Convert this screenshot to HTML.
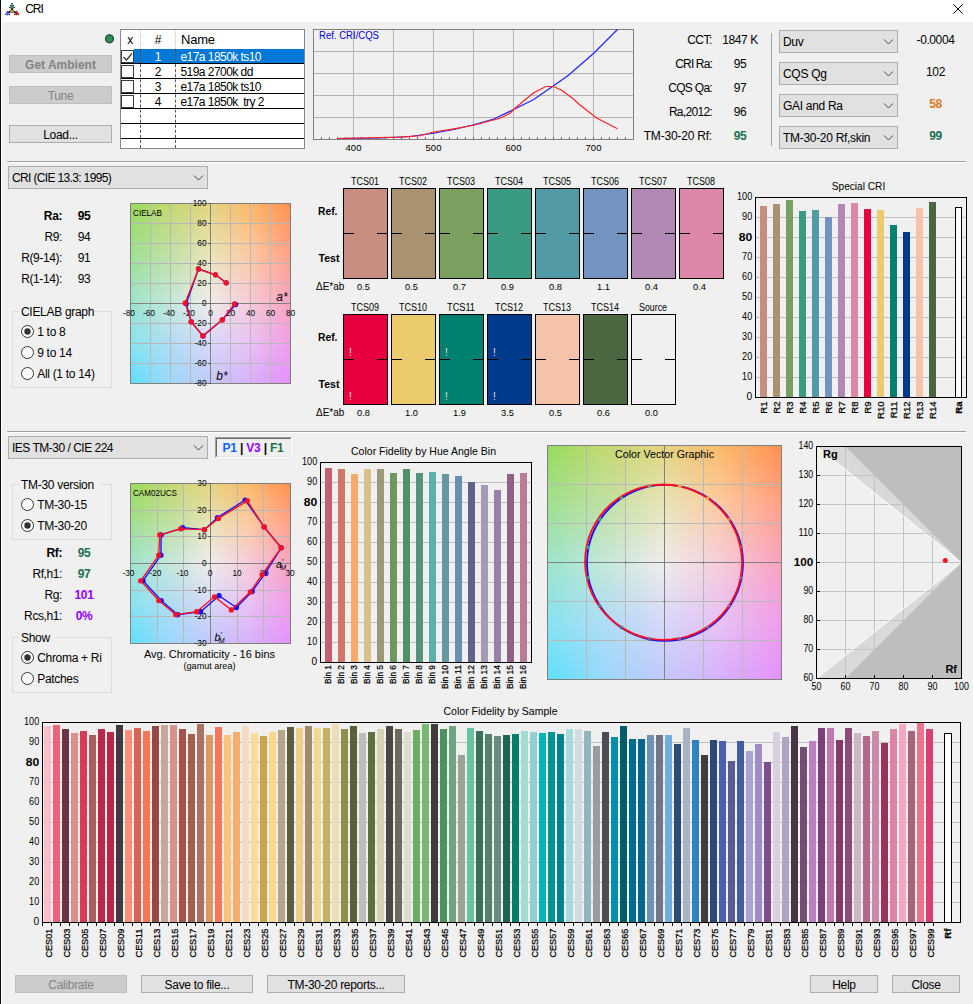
<!DOCTYPE html>
<html><head><meta charset="utf-8"><title>CRI</title>
<style>
html,body{margin:0;padding:0;}
body{width:973px;height:1004px;background:#f0f0f0;position:relative;overflow:hidden;font-family:"Liberation Sans", sans-serif;font-size:12px;color:#000;}
div{position:absolute;box-sizing:border-box;}
.t{white-space:nowrap;overflow:visible;}
.btn{background:#e1e1e1;border:1px solid #adadad;text-align:center;font-size:12px;letter-spacing:-0.3px;}
.btn.dis{background:#cccccc;border-color:#bfbfbf;color:#838383;}
.combo{background:#e1e1e1;border:1px solid #adadad;font-size:12px;letter-spacing:-0.45px;padding-left:3px;}
.grp{border:1px solid #dcdcdc;}
svg{position:absolute;left:0;top:0;}
svg text{font-family:"Liberation Sans", sans-serif;}
</style></head><body>
<div style="left:0px;top:0px;width:973px;height:22px;background:#fff;"></div>
<div style="left:0px;top:0px;width:1px;height:1004px;background:#111;"></div>
<div style="left:1px;top:22px;width:1px;height:982px;background:#fff;"></div>
<div class="t" style="left:25.3px;top:1.0px;width:200px;height:16px;line-height:16px;text-align:left;font-size:12px;font-weight:normal;color:#000;letter-spacing:-1.1px;">CRI</div>
<div class="btn dis" style="left:9px;top:55px;width:103px;height:18px;line-height:18px;font-weight:bold;letter-spacing:0px;">Get Ambient</div>
<div class="btn dis" style="left:9px;top:86px;width:103px;height:18px;line-height:18px;">Tune</div>
<div class="btn" style="left:9px;top:125px;width:103px;height:18px;line-height:18px;">Load...</div>
<div style="left:120px;top:29px;width:185px;height:120px;background:#fff;border:1px solid #828790;"></div>
<div style="left:134px;top:49px;width:170px;height:14px;background:#0078d7;"></div>
<div style="left:121px;top:63px;width:183px;height:1px;background:#000;"></div>
<div style="left:121px;top:78px;width:183px;height:1px;background:#000;"></div>
<div style="left:121px;top:93px;width:183px;height:1px;background:#000;"></div>
<div style="left:121px;top:108px;width:183px;height:1px;background:#000;"></div>
<div style="left:121px;top:123px;width:183px;height:1px;background:#000;"></div>
<div style="left:121px;top:138px;width:183px;height:1px;background:#000;"></div>
<div style="left:140px;top:30px;width:1px;height:19px;border-left:1px dotted #c4c4c4;"></div>
<div style="left:140px;top:49px;width:1px;height:99px;border-left:1px dashed #555;"></div>
<div style="left:175px;top:30px;width:1px;height:19px;border-left:1px dotted #c4c4c4;"></div>
<div style="left:175px;top:49px;width:1px;height:99px;border-left:1px dashed #555;"></div>
<div class="t" style="left:30.0px;top:32.0px;width:200px;height:16px;line-height:16px;text-align:center;font-size:12px;font-weight:normal;color:#000;letter-spacing:-0.3px;">x</div>
<div class="t" style="left:58.0px;top:32.0px;width:200px;height:16px;line-height:16px;text-align:center;font-size:12px;font-weight:normal;color:#000;letter-spacing:-0.3px;">#</div>
<div class="t" style="left:181px;top:32.0px;width:200px;height:16px;line-height:16px;text-align:left;font-size:13px;font-weight:normal;color:#000;letter-spacing:-0.2px;">Name</div>
<div class="t" style="left:58.0px;top:48.5px;width:200px;height:16px;line-height:16px;text-align:center;font-size:12px;font-weight:normal;color:#fff;letter-spacing:-0.3px;">1</div>
<div class="t" style="left:180.5px;top:48.5px;width:200px;height:16px;line-height:16px;text-align:left;font-size:12px;font-weight:normal;color:#fff;letter-spacing:-0.55px;">e17a 1850k ts10</div>
<div style="left:121px;top:50px;width:13px;height:13px;background:#fff;border:1px solid #3c3c3c;"></div>
<div class="t" style="left:58.0px;top:63.5px;width:200px;height:16px;line-height:16px;text-align:center;font-size:12px;font-weight:normal;color:#000;letter-spacing:-0.3px;">2</div>
<div class="t" style="left:180.5px;top:63.5px;width:200px;height:16px;line-height:16px;text-align:left;font-size:12px;font-weight:normal;color:#000;letter-spacing:-0.55px;">519a 2700k dd</div>
<div style="left:121px;top:65px;width:13px;height:13px;background:#fff;border:1px solid #3c3c3c;"></div>
<div class="t" style="left:58.0px;top:78.5px;width:200px;height:16px;line-height:16px;text-align:center;font-size:12px;font-weight:normal;color:#000;letter-spacing:-0.3px;">3</div>
<div class="t" style="left:180.5px;top:78.5px;width:200px;height:16px;line-height:16px;text-align:left;font-size:12px;font-weight:normal;color:#000;letter-spacing:-0.55px;">e17a 1850k ts10</div>
<div style="left:121px;top:80px;width:13px;height:13px;background:#fff;border:1px solid #3c3c3c;"></div>
<div class="t" style="left:58.0px;top:93.5px;width:200px;height:16px;line-height:16px;text-align:center;font-size:12px;font-weight:normal;color:#000;letter-spacing:-0.3px;">4</div>
<div class="t" style="left:180.5px;top:93.5px;width:200px;height:16px;line-height:16px;text-align:left;font-size:12px;font-weight:normal;color:#000;letter-spacing:-0.55px;">e17a 1850k&nbsp; try 2</div>
<div style="left:121px;top:95px;width:13px;height:13px;background:#fff;border:1px solid #3c3c3c;"></div>
<div class="t" style="left:512px;top:32.0px;width:200px;height:16px;line-height:16px;text-align:right;font-size:12px;font-weight:normal;color:#000;letter-spacing:-0.45px;">CCT:</div>
<div class="t" style="left:640.0px;top:32.0px;width:200px;height:16px;line-height:16px;text-align:center;font-size:12px;font-weight:normal;color:#000;letter-spacing:-0.4px;">1847 K</div>
<div class="t" style="left:512px;top:56.0px;width:200px;height:16px;line-height:16px;text-align:right;font-size:12px;font-weight:normal;color:#000;letter-spacing:-0.85px;">CRI Ra:</div>
<div class="t" style="left:640.0px;top:56.0px;width:200px;height:16px;line-height:16px;text-align:center;font-size:12px;font-weight:normal;color:#000;letter-spacing:-0.4px;">95</div>
<div class="t" style="left:512px;top:80.0px;width:200px;height:16px;line-height:16px;text-align:right;font-size:12px;font-weight:normal;color:#000;letter-spacing:-0.7px;">CQS Qa:</div>
<div class="t" style="left:640.0px;top:80.0px;width:200px;height:16px;line-height:16px;text-align:center;font-size:12px;font-weight:normal;color:#000;letter-spacing:-0.4px;">97</div>
<div class="t" style="left:512px;top:103.5px;width:200px;height:16px;line-height:16px;text-align:right;font-size:12px;font-weight:normal;color:#000;letter-spacing:-0.7px;">Ra,2012:</div>
<div class="t" style="left:640.0px;top:103.5px;width:200px;height:16px;line-height:16px;text-align:center;font-size:12px;font-weight:normal;color:#000;letter-spacing:-0.4px;">96</div>
<div class="t" style="left:512px;top:127.5px;width:200px;height:16px;line-height:16px;text-align:right;font-size:12px;font-weight:normal;color:#000;letter-spacing:-0.2px;">TM-30-20 Rf:</div>
<div class="t" style="left:640.0px;top:127.5px;width:200px;height:16px;line-height:16px;text-align:center;font-size:12px;font-weight:bold;color:#1a7050;letter-spacing:-0.3px;">95</div>
<div style="left:771px;top:33px;width:1px;height:113px;background:#a0a0a0;"></div>
<div class="combo" style="left:779px;top:30px;width:119px;height:23px;line-height:23px;letter-spacing:-0.3px;">Duv</div>
<div class="t" style="left:835.5px;top:32.0px;width:200px;height:16px;line-height:16px;text-align:center;font-size:12px;font-weight:normal;color:#000;letter-spacing:-0.4px;">-0.0004</div>
<div class="combo" style="left:779px;top:62px;width:119px;height:23px;line-height:23px;letter-spacing:-0.3px;">CQS Qg</div>
<div class="t" style="left:835.5px;top:64.0px;width:200px;height:16px;line-height:16px;text-align:center;font-size:12px;font-weight:normal;color:#000;letter-spacing:-0.4px;">102</div>
<div class="combo" style="left:779px;top:94px;width:119px;height:23px;line-height:23px;letter-spacing:-0.3px;">GAI and Ra</div>
<div class="t" style="left:835.5px;top:96.0px;width:200px;height:16px;line-height:16px;text-align:center;font-size:12px;font-weight:bold;color:#e07820;letter-spacing:-0.4px;">58</div>
<div class="combo" style="left:779px;top:126px;width:119px;height:23px;line-height:23px;letter-spacing:-0.3px;">TM-30-20 Rf,skin</div>
<div class="t" style="left:835.5px;top:128.0px;width:200px;height:16px;line-height:16px;text-align:center;font-size:12px;font-weight:bold;color:#1a7050;letter-spacing:-0.4px;">99</div>
<div style="left:7px;top:161px;width:959px;height:1px;background:#a0a0a0;"></div>
<div style="left:7px;top:162px;width:959px;height:1px;background:#fff;"></div>
<div style="left:7px;top:431px;width:959px;height:1px;background:#a0a0a0;"></div>
<div style="left:7px;top:432px;width:959px;height:1px;background:#fff;"></div>
<div class="combo" style="left:8px;top:166px;width:200px;height:23px;line-height:23px;letter-spacing:-0.65px;">CRI (CIE 13.3: 1995)</div>
<div class="t" style="left:-138px;top:207.5px;width:200px;height:16px;line-height:16px;text-align:right;font-size:12px;font-weight:bold;color:#000;letter-spacing:-0.4px;">Ra:</div>
<div class="t" style="left:-16.0px;top:207.5px;width:200px;height:16px;line-height:16px;text-align:center;font-size:12px;font-weight:bold;color:#000;letter-spacing:-0.4px;">95</div>
<div class="t" style="left:-138px;top:229.0px;width:200px;height:16px;line-height:16px;text-align:right;font-size:12px;font-weight:normal;color:#000;letter-spacing:-0.4px;">R9:</div>
<div class="t" style="left:-16.0px;top:229.0px;width:200px;height:16px;line-height:16px;text-align:center;font-size:12px;font-weight:normal;color:#000;letter-spacing:-0.4px;">94</div>
<div class="t" style="left:-138px;top:250.0px;width:200px;height:16px;line-height:16px;text-align:right;font-size:12px;font-weight:normal;color:#000;letter-spacing:-0.4px;">R(9-14):</div>
<div class="t" style="left:-16.0px;top:250.0px;width:200px;height:16px;line-height:16px;text-align:center;font-size:12px;font-weight:normal;color:#000;letter-spacing:-0.4px;">91</div>
<div class="t" style="left:-138px;top:271.0px;width:200px;height:16px;line-height:16px;text-align:right;font-size:12px;font-weight:normal;color:#000;letter-spacing:-0.4px;">R(1-14):</div>
<div class="t" style="left:-16.0px;top:271.0px;width:200px;height:16px;line-height:16px;text-align:center;font-size:12px;font-weight:normal;color:#000;letter-spacing:-0.4px;">93</div>
<div class="grp" style="left:12px;top:311px;width:100px;height:77px;"></div>
<div style="left:19px;top:303px;width:76px;height:16px;background:#f0f0f0;"></div>
<div class="t" style="left:21px;top:303.5px;width:200px;height:16px;line-height:16px;text-align:left;font-size:12px;font-weight:normal;color:#000;letter-spacing:-0.3px;">CIELAB graph</div>
<div class="t" style="left:37.2px;top:323.5px;width:200px;height:16px;line-height:16px;text-align:left;font-size:12px;font-weight:normal;color:#000;letter-spacing:-0.3px;">1 to 8</div>
<div class="t" style="left:37.2px;top:344.5px;width:200px;height:16px;line-height:16px;text-align:left;font-size:12px;font-weight:normal;color:#000;letter-spacing:-0.3px;">9 to 14</div>
<div class="t" style="left:37.2px;top:365.5px;width:200px;height:16px;line-height:16px;text-align:left;font-size:12px;font-weight:normal;color:#000;letter-spacing:-0.3px;">All (1 to 14)</div>
<div style="left:130px;top:203px;width:161px;height:181px;overflow:hidden;"><div style="left:0px;top:0px;width:40px;height:50px;background:linear-gradient(to bottom,#98dc5c,#a0e090);"></div><div style="left:0px;top:0px;width:40px;height:50px;background:linear-gradient(to bottom,#c4d870,#c0e0a4);-webkit-mask-image:linear-gradient(to right,transparent,#000);mask-image:linear-gradient(to right,transparent,#000);"></div><div style="left:40px;top:0px;width:40px;height:50px;background:linear-gradient(to bottom,#c4d870,#c0e0a4);"></div><div style="left:40px;top:0px;width:40px;height:50px;background:linear-gradient(to bottom,#e4d480,#e8e4b8);-webkit-mask-image:linear-gradient(to right,transparent,#000);mask-image:linear-gradient(to right,transparent,#000);"></div><div style="left:80px;top:0px;width:41px;height:50px;background:linear-gradient(to bottom,#e4d480,#e8e4b8);"></div><div style="left:80px;top:0px;width:41px;height:50px;background:linear-gradient(to bottom,#fcb868,#fcc8a0);-webkit-mask-image:linear-gradient(to right,transparent,#000);mask-image:linear-gradient(to right,transparent,#000);"></div><div style="left:121px;top:0px;width:40px;height:50px;background:linear-gradient(to bottom,#fcb868,#fcc8a0);"></div><div style="left:121px;top:0px;width:40px;height:50px;background:linear-gradient(to bottom,#ff9050,#ffa088);-webkit-mask-image:linear-gradient(to right,transparent,#000);mask-image:linear-gradient(to right,transparent,#000);"></div><div style="left:0px;top:50px;width:40px;height:50px;background:linear-gradient(to bottom,#a0e090,#9ce4cc);"></div><div style="left:0px;top:50px;width:40px;height:50px;background:linear-gradient(to bottom,#c0e0a4,#c4e8da);-webkit-mask-image:linear-gradient(to right,transparent,#000);mask-image:linear-gradient(to right,transparent,#000);"></div><div style="left:40px;top:50px;width:40px;height:50px;background:linear-gradient(to bottom,#c0e0a4,#c4e8da);"></div><div style="left:40px;top:50px;width:40px;height:50px;background:linear-gradient(to bottom,#e8e4b8,#f0ecec);-webkit-mask-image:linear-gradient(to right,transparent,#000);mask-image:linear-gradient(to right,transparent,#000);"></div><div style="left:80px;top:50px;width:41px;height:50px;background:linear-gradient(to bottom,#e8e4b8,#f0ecec);"></div><div style="left:80px;top:50px;width:41px;height:50px;background:linear-gradient(to bottom,#fcc8a0,#f6cad8);-webkit-mask-image:linear-gradient(to right,transparent,#000);mask-image:linear-gradient(to right,transparent,#000);"></div><div style="left:121px;top:50px;width:40px;height:50px;background:linear-gradient(to bottom,#fcc8a0,#f6cad8);"></div><div style="left:121px;top:50px;width:40px;height:50px;background:linear-gradient(to bottom,#ffa088,#f8a2c0);-webkit-mask-image:linear-gradient(to right,transparent,#000);mask-image:linear-gradient(to right,transparent,#000);"></div><div style="left:0px;top:100px;width:40px;height:41px;background:linear-gradient(to bottom,#9ce4cc,#88e4f0);"></div><div style="left:0px;top:100px;width:40px;height:41px;background:linear-gradient(to bottom,#c4e8da,#b0dcf4);-webkit-mask-image:linear-gradient(to right,transparent,#000);mask-image:linear-gradient(to right,transparent,#000);"></div><div style="left:40px;top:100px;width:40px;height:41px;background:linear-gradient(to bottom,#c4e8da,#b0dcf4);"></div><div style="left:40px;top:100px;width:40px;height:41px;background:linear-gradient(to bottom,#f0ecec,#d8d8f8);-webkit-mask-image:linear-gradient(to right,transparent,#000);mask-image:linear-gradient(to right,transparent,#000);"></div><div style="left:80px;top:100px;width:41px;height:41px;background:linear-gradient(to bottom,#f0ecec,#d8d8f8);"></div><div style="left:80px;top:100px;width:41px;height:41px;background:linear-gradient(to bottom,#f6cad8,#e8c0f4);-webkit-mask-image:linear-gradient(to right,transparent,#000);mask-image:linear-gradient(to right,transparent,#000);"></div><div style="left:121px;top:100px;width:40px;height:41px;background:linear-gradient(to bottom,#f6cad8,#e8c0f4);"></div><div style="left:121px;top:100px;width:40px;height:41px;background:linear-gradient(to bottom,#f8a2c0,#f09ce8);-webkit-mask-image:linear-gradient(to right,transparent,#000);mask-image:linear-gradient(to right,transparent,#000);"></div><div style="left:0px;top:141px;width:40px;height:40px;background:linear-gradient(to bottom,#88e4f0,#5ce0fc);"></div><div style="left:0px;top:141px;width:40px;height:40px;background:linear-gradient(to bottom,#b0dcf4,#9cd8fc);-webkit-mask-image:linear-gradient(to right,transparent,#000);mask-image:linear-gradient(to right,transparent,#000);"></div><div style="left:40px;top:141px;width:40px;height:40px;background:linear-gradient(to bottom,#b0dcf4,#9cd8fc);"></div><div style="left:40px;top:141px;width:40px;height:40px;background:linear-gradient(to bottom,#d8d8f8,#c2c8fc);-webkit-mask-image:linear-gradient(to right,transparent,#000);mask-image:linear-gradient(to right,transparent,#000);"></div><div style="left:80px;top:141px;width:41px;height:40px;background:linear-gradient(to bottom,#d8d8f8,#c2c8fc);"></div><div style="left:80px;top:141px;width:41px;height:40px;background:linear-gradient(to bottom,#e8c0f4,#d8b0fc);-webkit-mask-image:linear-gradient(to right,transparent,#000);mask-image:linear-gradient(to right,transparent,#000);"></div><div style="left:121px;top:141px;width:40px;height:40px;background:linear-gradient(to bottom,#e8c0f4,#d8b0fc);"></div><div style="left:121px;top:141px;width:40px;height:40px;background:linear-gradient(to bottom,#f09ce8,#e490fc);-webkit-mask-image:linear-gradient(to right,transparent,#000);mask-image:linear-gradient(to right,transparent,#000);"></div></div>
<div class="combo" style="left:8px;top:436px;width:200px;height:23px;line-height:23px;letter-spacing:-0.5px;">IES TM-30 / CIE 224</div>
<div style="left:215px;top:437px;width:77px;height:21px;border:1px solid;border-color:#a0a0a0 #fff #fff #a0a0a0;background:#f0f0f0;"></div>
<div style="left:216px;top:438px;width:75px;height:19px;border:1px solid;border-color:#696969 #e3e3e3 #e3e3e3 #696969;"></div>
<div class="t" style="left:222.5px;top:439.5px;width:200px;height:16px;line-height:16px;text-align:left;font-size:12px;font-weight:bold;color:#000;letter-spacing:-0.2px;"><span style="color:#0a64ff">P1</span> | <span style="color:#9400ff">V3</span> | <span style="color:#1a7050">F1</span></div>
<div class="grp" style="left:12px;top:484px;width:100px;height:56px;"></div>
<div style="left:19px;top:476px;width:82px;height:16px;background:#f0f0f0;"></div>
<div class="t" style="left:21px;top:476.5px;width:200px;height:16px;line-height:16px;text-align:left;font-size:12px;font-weight:normal;color:#000;letter-spacing:-0.3px;">TM-30 version</div>
<div class="t" style="left:37.2px;top:496.5px;width:200px;height:16px;line-height:16px;text-align:left;font-size:12px;font-weight:normal;color:#000;letter-spacing:-0.3px;">TM-30-15</div>
<div class="t" style="left:37.2px;top:517.5px;width:200px;height:16px;line-height:16px;text-align:left;font-size:12px;font-weight:normal;color:#000;letter-spacing:-0.3px;">TM-30-20</div>
<div class="t" style="left:-138px;top:545.0px;width:200px;height:16px;line-height:16px;text-align:right;font-size:12px;font-weight:bold;color:#000;letter-spacing:-0.4px;">Rf:</div>
<div class="t" style="left:-16.0px;top:545.0px;width:200px;height:16px;line-height:16px;text-align:center;font-size:12px;font-weight:bold;color:#1a7050;letter-spacing:-0.4px;">95</div>
<div class="t" style="left:-138px;top:566.0px;width:200px;height:16px;line-height:16px;text-align:right;font-size:12px;font-weight:normal;color:#000;letter-spacing:-0.4px;">Rf,h1:</div>
<div class="t" style="left:-16.0px;top:566.0px;width:200px;height:16px;line-height:16px;text-align:center;font-size:12px;font-weight:bold;color:#1a7050;letter-spacing:-0.4px;">97</div>
<div class="t" style="left:-138px;top:587.0px;width:200px;height:16px;line-height:16px;text-align:right;font-size:12px;font-weight:normal;color:#000;letter-spacing:-0.4px;">Rg:</div>
<div class="t" style="left:-16.0px;top:587.0px;width:200px;height:16px;line-height:16px;text-align:center;font-size:12px;font-weight:bold;color:#9400ff;letter-spacing:-0.4px;">101</div>
<div class="t" style="left:-138px;top:608.0px;width:200px;height:16px;line-height:16px;text-align:right;font-size:12px;font-weight:normal;color:#000;letter-spacing:-0.4px;">Rcs,h1:</div>
<div class="t" style="left:-16.0px;top:608.0px;width:200px;height:16px;line-height:16px;text-align:center;font-size:12px;font-weight:bold;color:#9400ff;letter-spacing:-0.4px;">0%</div>
<div class="grp" style="left:12px;top:637px;width:100px;height:56px;"></div>
<div style="left:19px;top:629px;width:36px;height:16px;background:#f0f0f0;"></div>
<div class="t" style="left:21px;top:629.5px;width:200px;height:16px;line-height:16px;text-align:left;font-size:12px;font-weight:normal;color:#000;letter-spacing:-0.3px;">Show</div>
<div class="t" style="left:37.2px;top:649.5px;width:200px;height:16px;line-height:16px;text-align:left;font-size:12px;font-weight:normal;color:#000;letter-spacing:-0.3px;">Chroma + Ri</div>
<div class="t" style="left:37.2px;top:670.5px;width:200px;height:16px;line-height:16px;text-align:left;font-size:12px;font-weight:normal;color:#000;letter-spacing:-0.3px;">Patches</div>
<div style="left:130px;top:483px;width:161px;height:161px;overflow:hidden;"><div style="left:0px;top:0px;width:40px;height:40px;background:linear-gradient(to bottom,#98dc5c,#a0e090);"></div><div style="left:0px;top:0px;width:40px;height:40px;background:linear-gradient(to bottom,#c4d870,#c0e0a4);-webkit-mask-image:linear-gradient(to right,transparent,#000);mask-image:linear-gradient(to right,transparent,#000);"></div><div style="left:40px;top:0px;width:40px;height:40px;background:linear-gradient(to bottom,#c4d870,#c0e0a4);"></div><div style="left:40px;top:0px;width:40px;height:40px;background:linear-gradient(to bottom,#e4d480,#e8e4b8);-webkit-mask-image:linear-gradient(to right,transparent,#000);mask-image:linear-gradient(to right,transparent,#000);"></div><div style="left:80px;top:0px;width:41px;height:40px;background:linear-gradient(to bottom,#e4d480,#e8e4b8);"></div><div style="left:80px;top:0px;width:41px;height:40px;background:linear-gradient(to bottom,#fcb868,#fcc8a0);-webkit-mask-image:linear-gradient(to right,transparent,#000);mask-image:linear-gradient(to right,transparent,#000);"></div><div style="left:121px;top:0px;width:40px;height:40px;background:linear-gradient(to bottom,#fcb868,#fcc8a0);"></div><div style="left:121px;top:0px;width:40px;height:40px;background:linear-gradient(to bottom,#ff9050,#ffa088);-webkit-mask-image:linear-gradient(to right,transparent,#000);mask-image:linear-gradient(to right,transparent,#000);"></div><div style="left:0px;top:40px;width:40px;height:40px;background:linear-gradient(to bottom,#a0e090,#9ce4cc);"></div><div style="left:0px;top:40px;width:40px;height:40px;background:linear-gradient(to bottom,#c0e0a4,#c4e8da);-webkit-mask-image:linear-gradient(to right,transparent,#000);mask-image:linear-gradient(to right,transparent,#000);"></div><div style="left:40px;top:40px;width:40px;height:40px;background:linear-gradient(to bottom,#c0e0a4,#c4e8da);"></div><div style="left:40px;top:40px;width:40px;height:40px;background:linear-gradient(to bottom,#e8e4b8,#f0ecec);-webkit-mask-image:linear-gradient(to right,transparent,#000);mask-image:linear-gradient(to right,transparent,#000);"></div><div style="left:80px;top:40px;width:41px;height:40px;background:linear-gradient(to bottom,#e8e4b8,#f0ecec);"></div><div style="left:80px;top:40px;width:41px;height:40px;background:linear-gradient(to bottom,#fcc8a0,#f6cad8);-webkit-mask-image:linear-gradient(to right,transparent,#000);mask-image:linear-gradient(to right,transparent,#000);"></div><div style="left:121px;top:40px;width:40px;height:40px;background:linear-gradient(to bottom,#fcc8a0,#f6cad8);"></div><div style="left:121px;top:40px;width:40px;height:40px;background:linear-gradient(to bottom,#ffa088,#f8a2c0);-webkit-mask-image:linear-gradient(to right,transparent,#000);mask-image:linear-gradient(to right,transparent,#000);"></div><div style="left:0px;top:80px;width:40px;height:41px;background:linear-gradient(to bottom,#9ce4cc,#88e4f0);"></div><div style="left:0px;top:80px;width:40px;height:41px;background:linear-gradient(to bottom,#c4e8da,#b0dcf4);-webkit-mask-image:linear-gradient(to right,transparent,#000);mask-image:linear-gradient(to right,transparent,#000);"></div><div style="left:40px;top:80px;width:40px;height:41px;background:linear-gradient(to bottom,#c4e8da,#b0dcf4);"></div><div style="left:40px;top:80px;width:40px;height:41px;background:linear-gradient(to bottom,#f0ecec,#d8d8f8);-webkit-mask-image:linear-gradient(to right,transparent,#000);mask-image:linear-gradient(to right,transparent,#000);"></div><div style="left:80px;top:80px;width:41px;height:41px;background:linear-gradient(to bottom,#f0ecec,#d8d8f8);"></div><div style="left:80px;top:80px;width:41px;height:41px;background:linear-gradient(to bottom,#f6cad8,#e8c0f4);-webkit-mask-image:linear-gradient(to right,transparent,#000);mask-image:linear-gradient(to right,transparent,#000);"></div><div style="left:121px;top:80px;width:40px;height:41px;background:linear-gradient(to bottom,#f6cad8,#e8c0f4);"></div><div style="left:121px;top:80px;width:40px;height:41px;background:linear-gradient(to bottom,#f8a2c0,#f09ce8);-webkit-mask-image:linear-gradient(to right,transparent,#000);mask-image:linear-gradient(to right,transparent,#000);"></div><div style="left:0px;top:121px;width:40px;height:40px;background:linear-gradient(to bottom,#88e4f0,#5ce0fc);"></div><div style="left:0px;top:121px;width:40px;height:40px;background:linear-gradient(to bottom,#b0dcf4,#9cd8fc);-webkit-mask-image:linear-gradient(to right,transparent,#000);mask-image:linear-gradient(to right,transparent,#000);"></div><div style="left:40px;top:121px;width:40px;height:40px;background:linear-gradient(to bottom,#b0dcf4,#9cd8fc);"></div><div style="left:40px;top:121px;width:40px;height:40px;background:linear-gradient(to bottom,#d8d8f8,#c2c8fc);-webkit-mask-image:linear-gradient(to right,transparent,#000);mask-image:linear-gradient(to right,transparent,#000);"></div><div style="left:80px;top:121px;width:41px;height:40px;background:linear-gradient(to bottom,#d8d8f8,#c2c8fc);"></div><div style="left:80px;top:121px;width:41px;height:40px;background:linear-gradient(to bottom,#e8c0f4,#d8b0fc);-webkit-mask-image:linear-gradient(to right,transparent,#000);mask-image:linear-gradient(to right,transparent,#000);"></div><div style="left:121px;top:121px;width:40px;height:40px;background:linear-gradient(to bottom,#e8c0f4,#d8b0fc);"></div><div style="left:121px;top:121px;width:40px;height:40px;background:linear-gradient(to bottom,#f09ce8,#e490fc);-webkit-mask-image:linear-gradient(to right,transparent,#000);mask-image:linear-gradient(to right,transparent,#000);"></div></div>
<div style="left:547px;top:445px;width:235px;height:235px;overflow:hidden;"><div style="left:0px;top:0px;width:59px;height:59px;background:linear-gradient(to bottom,#98dc5c,#a0e090);"></div><div style="left:0px;top:0px;width:59px;height:59px;background:linear-gradient(to bottom,#c4d870,#c0e0a4);-webkit-mask-image:linear-gradient(to right,transparent,#000);mask-image:linear-gradient(to right,transparent,#000);"></div><div style="left:59px;top:0px;width:59px;height:59px;background:linear-gradient(to bottom,#c4d870,#c0e0a4);"></div><div style="left:59px;top:0px;width:59px;height:59px;background:linear-gradient(to bottom,#e4d480,#e8e4b8);-webkit-mask-image:linear-gradient(to right,transparent,#000);mask-image:linear-gradient(to right,transparent,#000);"></div><div style="left:118px;top:0px;width:58px;height:59px;background:linear-gradient(to bottom,#e4d480,#e8e4b8);"></div><div style="left:118px;top:0px;width:58px;height:59px;background:linear-gradient(to bottom,#fcb868,#fcc8a0);-webkit-mask-image:linear-gradient(to right,transparent,#000);mask-image:linear-gradient(to right,transparent,#000);"></div><div style="left:176px;top:0px;width:59px;height:59px;background:linear-gradient(to bottom,#fcb868,#fcc8a0);"></div><div style="left:176px;top:0px;width:59px;height:59px;background:linear-gradient(to bottom,#ff9050,#ffa088);-webkit-mask-image:linear-gradient(to right,transparent,#000);mask-image:linear-gradient(to right,transparent,#000);"></div><div style="left:0px;top:59px;width:59px;height:59px;background:linear-gradient(to bottom,#a0e090,#9ce4cc);"></div><div style="left:0px;top:59px;width:59px;height:59px;background:linear-gradient(to bottom,#c0e0a4,#c4e8da);-webkit-mask-image:linear-gradient(to right,transparent,#000);mask-image:linear-gradient(to right,transparent,#000);"></div><div style="left:59px;top:59px;width:59px;height:59px;background:linear-gradient(to bottom,#c0e0a4,#c4e8da);"></div><div style="left:59px;top:59px;width:59px;height:59px;background:linear-gradient(to bottom,#e8e4b8,#f0ecec);-webkit-mask-image:linear-gradient(to right,transparent,#000);mask-image:linear-gradient(to right,transparent,#000);"></div><div style="left:118px;top:59px;width:58px;height:59px;background:linear-gradient(to bottom,#e8e4b8,#f0ecec);"></div><div style="left:118px;top:59px;width:58px;height:59px;background:linear-gradient(to bottom,#fcc8a0,#f6cad8);-webkit-mask-image:linear-gradient(to right,transparent,#000);mask-image:linear-gradient(to right,transparent,#000);"></div><div style="left:176px;top:59px;width:59px;height:59px;background:linear-gradient(to bottom,#fcc8a0,#f6cad8);"></div><div style="left:176px;top:59px;width:59px;height:59px;background:linear-gradient(to bottom,#ffa088,#f8a2c0);-webkit-mask-image:linear-gradient(to right,transparent,#000);mask-image:linear-gradient(to right,transparent,#000);"></div><div style="left:0px;top:118px;width:59px;height:58px;background:linear-gradient(to bottom,#9ce4cc,#88e4f0);"></div><div style="left:0px;top:118px;width:59px;height:58px;background:linear-gradient(to bottom,#c4e8da,#b0dcf4);-webkit-mask-image:linear-gradient(to right,transparent,#000);mask-image:linear-gradient(to right,transparent,#000);"></div><div style="left:59px;top:118px;width:59px;height:58px;background:linear-gradient(to bottom,#c4e8da,#b0dcf4);"></div><div style="left:59px;top:118px;width:59px;height:58px;background:linear-gradient(to bottom,#f0ecec,#d8d8f8);-webkit-mask-image:linear-gradient(to right,transparent,#000);mask-image:linear-gradient(to right,transparent,#000);"></div><div style="left:118px;top:118px;width:58px;height:58px;background:linear-gradient(to bottom,#f0ecec,#d8d8f8);"></div><div style="left:118px;top:118px;width:58px;height:58px;background:linear-gradient(to bottom,#f6cad8,#e8c0f4);-webkit-mask-image:linear-gradient(to right,transparent,#000);mask-image:linear-gradient(to right,transparent,#000);"></div><div style="left:176px;top:118px;width:59px;height:58px;background:linear-gradient(to bottom,#f6cad8,#e8c0f4);"></div><div style="left:176px;top:118px;width:59px;height:58px;background:linear-gradient(to bottom,#f8a2c0,#f09ce8);-webkit-mask-image:linear-gradient(to right,transparent,#000);mask-image:linear-gradient(to right,transparent,#000);"></div><div style="left:0px;top:176px;width:59px;height:59px;background:linear-gradient(to bottom,#88e4f0,#5ce0fc);"></div><div style="left:0px;top:176px;width:59px;height:59px;background:linear-gradient(to bottom,#b0dcf4,#9cd8fc);-webkit-mask-image:linear-gradient(to right,transparent,#000);mask-image:linear-gradient(to right,transparent,#000);"></div><div style="left:59px;top:176px;width:59px;height:59px;background:linear-gradient(to bottom,#b0dcf4,#9cd8fc);"></div><div style="left:59px;top:176px;width:59px;height:59px;background:linear-gradient(to bottom,#d8d8f8,#c2c8fc);-webkit-mask-image:linear-gradient(to right,transparent,#000);mask-image:linear-gradient(to right,transparent,#000);"></div><div style="left:118px;top:176px;width:58px;height:59px;background:linear-gradient(to bottom,#d8d8f8,#c2c8fc);"></div><div style="left:118px;top:176px;width:58px;height:59px;background:linear-gradient(to bottom,#e8c0f4,#d8b0fc);-webkit-mask-image:linear-gradient(to right,transparent,#000);mask-image:linear-gradient(to right,transparent,#000);"></div><div style="left:176px;top:176px;width:59px;height:59px;background:linear-gradient(to bottom,#e8c0f4,#d8b0fc);"></div><div style="left:176px;top:176px;width:59px;height:59px;background:linear-gradient(to bottom,#f09ce8,#e490fc);-webkit-mask-image:linear-gradient(to right,transparent,#000);mask-image:linear-gradient(to right,transparent,#000);"></div></div>
<div class="btn dis" style="left:15px;top:975px;width:112px;height:18px;line-height:18px;">Calibrate</div>
<div class="btn" style="left:141px;top:975px;width:112px;height:18px;line-height:18px;">Save to file...</div>
<div class="btn" style="left:267px;top:975px;width:138px;height:18px;line-height:18px;">TM-30-20 reports...</div>
<div class="btn" style="left:810px;top:975px;width:68px;height:18px;line-height:18px;">Help</div>
<div class="btn" style="left:892px;top:975px;width:68px;height:18px;line-height:18px;">Close</div>
<svg width="973" height="1004" viewBox="0 0 973 1004">
<path d="M953.3 4.3 L962.7 13.7 M962.7 4.3 L953.3 13.7" stroke="#000" stroke-width="1" fill="none"/>
<g><path d="M12 8 L12 10.5 M10 11.5 L8.5 12.5 M14 11.5 L15.5 12.5" stroke="#000" stroke-width="1.6" fill="none"/><path d="M12 3.2 L14.8 7.8 L9.2 7.8 Z" fill="#3a9464" stroke="#000" stroke-width="1" stroke-dasharray="1 1.2"/><path d="M5.2 14.8 L7.6 10.8 L10 14.8 Z" fill="#6464ff" stroke="#00004a" stroke-width="0.9" stroke-dasharray="1 1.3"/><path d="M14.2 14.8 L16.6 10.8 L19 14.8 Z" fill="#ff0000" stroke="#300000" stroke-width="0.9" stroke-dasharray="1 1.3"/><rect x="10.8" y="9.9" width="2.4" height="2.4" fill="#ffd45a" stroke="#3a3000" stroke-width="0.8"/></g>
<circle cx="109.5" cy="38.8" r="4" fill="#2e8b57" stroke="#1c4a30" stroke-width="1.2"/>
<path d="M123.5 57 L126.5 60 L132 53.5" stroke="#333" stroke-width="1.2" fill="none"/>
<line x1="353.5" y1="29.5" x2="353.5" y2="139.5" stroke="#b4b4b4" stroke-width="1" shape-rendering="crispEdges"/>
<line x1="393.5" y1="29.5" x2="393.5" y2="139.5" stroke="#b4b4b4" stroke-width="1" shape-rendering="crispEdges"/>
<line x1="433.5" y1="29.5" x2="433.5" y2="139.5" stroke="#b4b4b4" stroke-width="1" shape-rendering="crispEdges"/>
<line x1="473.5" y1="29.5" x2="473.5" y2="139.5" stroke="#b4b4b4" stroke-width="1" shape-rendering="crispEdges"/>
<line x1="513.5" y1="29.5" x2="513.5" y2="139.5" stroke="#b4b4b4" stroke-width="1" shape-rendering="crispEdges"/>
<line x1="553.5" y1="29.5" x2="553.5" y2="139.5" stroke="#b4b4b4" stroke-width="1" shape-rendering="crispEdges"/>
<line x1="593.5" y1="29.5" x2="593.5" y2="139.5" stroke="#b4b4b4" stroke-width="1" shape-rendering="crispEdges"/>
<line x1="313.5" y1="51.5" x2="633.5" y2="51.5" stroke="#b4b4b4" stroke-width="1" shape-rendering="crispEdges"/>
<line x1="313.5" y1="73.5" x2="633.5" y2="73.5" stroke="#b4b4b4" stroke-width="1" shape-rendering="crispEdges"/>
<line x1="313.5" y1="95.5" x2="633.5" y2="95.5" stroke="#b4b4b4" stroke-width="1" shape-rendering="crispEdges"/>
<line x1="313.5" y1="117.5" x2="633.5" y2="117.5" stroke="#b4b4b4" stroke-width="1" shape-rendering="crispEdges"/>
<line x1="321.5" y1="136.5" x2="321.5" y2="139.5" stroke="#606060" stroke-width="1" shape-rendering="crispEdges"/>
<line x1="329.5" y1="136.5" x2="329.5" y2="139.5" stroke="#606060" stroke-width="1" shape-rendering="crispEdges"/>
<line x1="337.5" y1="136.5" x2="337.5" y2="139.5" stroke="#606060" stroke-width="1" shape-rendering="crispEdges"/>
<line x1="345.5" y1="136.5" x2="345.5" y2="139.5" stroke="#606060" stroke-width="1" shape-rendering="crispEdges"/>
<line x1="353.5" y1="136.5" x2="353.5" y2="139.5" stroke="#606060" stroke-width="1" shape-rendering="crispEdges"/>
<line x1="361.5" y1="136.5" x2="361.5" y2="139.5" stroke="#606060" stroke-width="1" shape-rendering="crispEdges"/>
<line x1="369.5" y1="136.5" x2="369.5" y2="139.5" stroke="#606060" stroke-width="1" shape-rendering="crispEdges"/>
<line x1="377.5" y1="136.5" x2="377.5" y2="139.5" stroke="#606060" stroke-width="1" shape-rendering="crispEdges"/>
<line x1="385.5" y1="136.5" x2="385.5" y2="139.5" stroke="#606060" stroke-width="1" shape-rendering="crispEdges"/>
<line x1="393.5" y1="136.5" x2="393.5" y2="139.5" stroke="#606060" stroke-width="1" shape-rendering="crispEdges"/>
<line x1="401.5" y1="136.5" x2="401.5" y2="139.5" stroke="#606060" stroke-width="1" shape-rendering="crispEdges"/>
<line x1="409.5" y1="136.5" x2="409.5" y2="139.5" stroke="#606060" stroke-width="1" shape-rendering="crispEdges"/>
<line x1="417.5" y1="136.5" x2="417.5" y2="139.5" stroke="#606060" stroke-width="1" shape-rendering="crispEdges"/>
<line x1="425.5" y1="136.5" x2="425.5" y2="139.5" stroke="#606060" stroke-width="1" shape-rendering="crispEdges"/>
<line x1="433.5" y1="136.5" x2="433.5" y2="139.5" stroke="#606060" stroke-width="1" shape-rendering="crispEdges"/>
<line x1="441.5" y1="136.5" x2="441.5" y2="139.5" stroke="#606060" stroke-width="1" shape-rendering="crispEdges"/>
<line x1="449.5" y1="136.5" x2="449.5" y2="139.5" stroke="#606060" stroke-width="1" shape-rendering="crispEdges"/>
<line x1="457.5" y1="136.5" x2="457.5" y2="139.5" stroke="#606060" stroke-width="1" shape-rendering="crispEdges"/>
<line x1="465.5" y1="136.5" x2="465.5" y2="139.5" stroke="#606060" stroke-width="1" shape-rendering="crispEdges"/>
<line x1="473.5" y1="136.5" x2="473.5" y2="139.5" stroke="#606060" stroke-width="1" shape-rendering="crispEdges"/>
<line x1="481.5" y1="136.5" x2="481.5" y2="139.5" stroke="#606060" stroke-width="1" shape-rendering="crispEdges"/>
<line x1="489.5" y1="136.5" x2="489.5" y2="139.5" stroke="#606060" stroke-width="1" shape-rendering="crispEdges"/>
<line x1="497.5" y1="136.5" x2="497.5" y2="139.5" stroke="#606060" stroke-width="1" shape-rendering="crispEdges"/>
<line x1="505.5" y1="136.5" x2="505.5" y2="139.5" stroke="#606060" stroke-width="1" shape-rendering="crispEdges"/>
<line x1="513.5" y1="136.5" x2="513.5" y2="139.5" stroke="#606060" stroke-width="1" shape-rendering="crispEdges"/>
<line x1="521.5" y1="136.5" x2="521.5" y2="139.5" stroke="#606060" stroke-width="1" shape-rendering="crispEdges"/>
<line x1="529.5" y1="136.5" x2="529.5" y2="139.5" stroke="#606060" stroke-width="1" shape-rendering="crispEdges"/>
<line x1="537.5" y1="136.5" x2="537.5" y2="139.5" stroke="#606060" stroke-width="1" shape-rendering="crispEdges"/>
<line x1="545.5" y1="136.5" x2="545.5" y2="139.5" stroke="#606060" stroke-width="1" shape-rendering="crispEdges"/>
<line x1="553.5" y1="136.5" x2="553.5" y2="139.5" stroke="#606060" stroke-width="1" shape-rendering="crispEdges"/>
<line x1="561.5" y1="136.5" x2="561.5" y2="139.5" stroke="#606060" stroke-width="1" shape-rendering="crispEdges"/>
<line x1="569.5" y1="136.5" x2="569.5" y2="139.5" stroke="#606060" stroke-width="1" shape-rendering="crispEdges"/>
<line x1="577.5" y1="136.5" x2="577.5" y2="139.5" stroke="#606060" stroke-width="1" shape-rendering="crispEdges"/>
<line x1="585.5" y1="136.5" x2="585.5" y2="139.5" stroke="#606060" stroke-width="1" shape-rendering="crispEdges"/>
<line x1="593.5" y1="136.5" x2="593.5" y2="139.5" stroke="#606060" stroke-width="1" shape-rendering="crispEdges"/>
<line x1="601.5" y1="136.5" x2="601.5" y2="139.5" stroke="#606060" stroke-width="1" shape-rendering="crispEdges"/>
<line x1="609.5" y1="136.5" x2="609.5" y2="139.5" stroke="#606060" stroke-width="1" shape-rendering="crispEdges"/>
<line x1="617.5" y1="136.5" x2="617.5" y2="139.5" stroke="#606060" stroke-width="1" shape-rendering="crispEdges"/>
<line x1="625.5" y1="136.5" x2="625.5" y2="139.5" stroke="#606060" stroke-width="1" shape-rendering="crispEdges"/>
<rect x="313.5" y="29.5" width="320.0" height="110.0" fill="none" stroke="#808080" stroke-width="1" shape-rendering="crispEdges"/>
<polyline fill="none" stroke="#2020ff" stroke-width="1.2" points="337.5,138.5 380,138 410,136.5 433.5,133.25 453.75,129.5 473.75,124.75 493.75,119 513.75,109.5 533.75,99.5 553.25,86 568.75,75 593.75,53.25 617.5,29.5"/>
<polyline fill="none" stroke="#ff2020" stroke-width="1.2" points="337.5,138.5 400,137.2 420,135.75 433.5,132 453.75,128.8 473.75,125.25 500,118.25 510,113.25 513.75,109.5 525,99.7 533.75,92.75 545.75,86.5 553.25,86.5 561.25,90 572.5,98.25 578.75,104 596.25,117.75 617.5,128.75"/>
<text x="319" y="39.10" text-anchor="start" font-size="10" font-weight="normal" fill="#0000e0" textLength="60" lengthAdjust="spacingAndGlyphs" >Ref. CRI/CQS</text>
<text x="353.5" y="150.92" text-anchor="middle" font-size="9.5" font-weight="normal" fill="#000" >400</text>
<text x="433.5" y="150.92" text-anchor="middle" font-size="9.5" font-weight="normal" fill="#000" >500</text>
<text x="513.5" y="150.92" text-anchor="middle" font-size="9.5" font-weight="normal" fill="#000" >600</text>
<text x="593.5" y="150.92" text-anchor="middle" font-size="9.5" font-weight="normal" fill="#000" >700</text>
<path d="M884.0 39.5 L888.5 44.0 L893.0 39.5" stroke="#444" stroke-width="1" fill="none"/>
<path d="M884.0 71.5 L888.5 76.0 L893.0 71.5" stroke="#444" stroke-width="1" fill="none"/>
<path d="M884.0 103.5 L888.5 108.0 L893.0 103.5" stroke="#444" stroke-width="1" fill="none"/>
<path d="M884.0 135.5 L888.5 140.0 L893.0 135.5" stroke="#444" stroke-width="1" fill="none"/>
<path d="M194.0 175.5 L198.5 180.0 L203.0 175.5" stroke="#444" stroke-width="1" fill="none"/>
<circle cx="27.5" cy="331.5" r="6" fill="#fff" stroke="#333" stroke-width="1"/>
<circle cx="27.5" cy="331.5" r="3.2" fill="#333"/>
<circle cx="27.5" cy="352.5" r="6" fill="#fff" stroke="#333" stroke-width="1"/>
<circle cx="27.5" cy="373.5" r="6" fill="#fff" stroke="#333" stroke-width="1"/>
<line x1="130.5" y1="203.5" x2="130.5" y2="383.5" stroke="#b8b8b8" stroke-width="1" shape-rendering="crispEdges"/>
<line x1="150.5" y1="203.5" x2="150.5" y2="383.5" stroke="#b8b8b8" stroke-width="1" shape-rendering="crispEdges"/>
<line x1="170.5" y1="203.5" x2="170.5" y2="383.5" stroke="#b8b8b8" stroke-width="1" shape-rendering="crispEdges"/>
<line x1="190.5" y1="203.5" x2="190.5" y2="383.5" stroke="#b8b8b8" stroke-width="1" shape-rendering="crispEdges"/>
<line x1="230.5" y1="203.5" x2="230.5" y2="383.5" stroke="#b8b8b8" stroke-width="1" shape-rendering="crispEdges"/>
<line x1="250.5" y1="203.5" x2="250.5" y2="383.5" stroke="#b8b8b8" stroke-width="1" shape-rendering="crispEdges"/>
<line x1="270.5" y1="203.5" x2="270.5" y2="383.5" stroke="#b8b8b8" stroke-width="1" shape-rendering="crispEdges"/>
<line x1="290.5" y1="203.5" x2="290.5" y2="383.5" stroke="#b8b8b8" stroke-width="1" shape-rendering="crispEdges"/>
<line x1="130.5" y1="383.5" x2="290.5" y2="383.5" stroke="#b8b8b8" stroke-width="1" shape-rendering="crispEdges"/>
<line x1="130.5" y1="363.5" x2="290.5" y2="363.5" stroke="#b8b8b8" stroke-width="1" shape-rendering="crispEdges"/>
<line x1="130.5" y1="343.5" x2="290.5" y2="343.5" stroke="#b8b8b8" stroke-width="1" shape-rendering="crispEdges"/>
<line x1="130.5" y1="323.5" x2="290.5" y2="323.5" stroke="#b8b8b8" stroke-width="1" shape-rendering="crispEdges"/>
<line x1="130.5" y1="283.5" x2="290.5" y2="283.5" stroke="#b8b8b8" stroke-width="1" shape-rendering="crispEdges"/>
<line x1="130.5" y1="263.5" x2="290.5" y2="263.5" stroke="#b8b8b8" stroke-width="1" shape-rendering="crispEdges"/>
<line x1="130.5" y1="243.5" x2="290.5" y2="243.5" stroke="#b8b8b8" stroke-width="1" shape-rendering="crispEdges"/>
<line x1="130.5" y1="223.5" x2="290.5" y2="223.5" stroke="#b8b8b8" stroke-width="1" shape-rendering="crispEdges"/>
<line x1="130.5" y1="203.5" x2="290.5" y2="203.5" stroke="#b8b8b8" stroke-width="1" shape-rendering="crispEdges"/>
<line x1="210.5" y1="203" x2="210.5" y2="384" stroke="#808080" stroke-width="1" shape-rendering="crispEdges"/>
<line x1="130" y1="303.5" x2="291" y2="303.5" stroke="#808080" stroke-width="1" shape-rendering="crispEdges"/>
<rect x="130.5" y="203.5" width="160" height="180" fill="none" stroke="#808080" stroke-width="1" shape-rendering="crispEdges"/>
<line x1="207.5" y1="383.5" x2="210.5" y2="383.5" stroke="#606060" stroke-width="1" shape-rendering="crispEdges"/>
<text x="206.5" y="385.99" text-anchor="end" font-size="8.3" font-weight="normal" fill="#000" >-80</text>
<line x1="207.5" y1="363.5" x2="210.5" y2="363.5" stroke="#606060" stroke-width="1" shape-rendering="crispEdges"/>
<text x="206.5" y="365.99" text-anchor="end" font-size="8.3" font-weight="normal" fill="#000" >-60</text>
<line x1="207.5" y1="343.5" x2="210.5" y2="343.5" stroke="#606060" stroke-width="1" shape-rendering="crispEdges"/>
<text x="206.5" y="345.99" text-anchor="end" font-size="8.3" font-weight="normal" fill="#000" >-40</text>
<line x1="207.5" y1="323.5" x2="210.5" y2="323.5" stroke="#606060" stroke-width="1" shape-rendering="crispEdges"/>
<text x="206.5" y="325.99" text-anchor="end" font-size="8.3" font-weight="normal" fill="#000" >-20</text>
<line x1="207.5" y1="303.5" x2="210.5" y2="303.5" stroke="#606060" stroke-width="1" shape-rendering="crispEdges"/>
<text x="206.5" y="305.99" text-anchor="end" font-size="8.3" font-weight="normal" fill="#000" >0</text>
<line x1="207.5" y1="283.5" x2="210.5" y2="283.5" stroke="#606060" stroke-width="1" shape-rendering="crispEdges"/>
<text x="206.5" y="285.99" text-anchor="end" font-size="8.3" font-weight="normal" fill="#000" >20</text>
<line x1="207.5" y1="263.5" x2="210.5" y2="263.5" stroke="#606060" stroke-width="1" shape-rendering="crispEdges"/>
<text x="206.5" y="265.99" text-anchor="end" font-size="8.3" font-weight="normal" fill="#000" >40</text>
<line x1="207.5" y1="243.5" x2="210.5" y2="243.5" stroke="#606060" stroke-width="1" shape-rendering="crispEdges"/>
<text x="206.5" y="245.99" text-anchor="end" font-size="8.3" font-weight="normal" fill="#000" >60</text>
<line x1="207.5" y1="223.5" x2="210.5" y2="223.5" stroke="#606060" stroke-width="1" shape-rendering="crispEdges"/>
<text x="206.5" y="225.99" text-anchor="end" font-size="8.3" font-weight="normal" fill="#000" >80</text>
<line x1="207.5" y1="203.5" x2="210.5" y2="203.5" stroke="#606060" stroke-width="1" shape-rendering="crispEdges"/>
<text x="206.5" y="205.99" text-anchor="end" font-size="8.3" font-weight="normal" fill="#000" >100</text>
<text x="128.9" y="316.49" text-anchor="middle" font-size="8.3" font-weight="normal" fill="#000" >-80</text>
<text x="148.9" y="316.49" text-anchor="middle" font-size="8.3" font-weight="normal" fill="#000" >-60</text>
<text x="168.9" y="316.49" text-anchor="middle" font-size="8.3" font-weight="normal" fill="#000" >-40</text>
<text x="188.9" y="316.49" text-anchor="middle" font-size="8.3" font-weight="normal" fill="#000" >-20</text>
<text x="210.5" y="316.49" text-anchor="middle" font-size="8.3" font-weight="normal" fill="#000" >0</text>
<text x="230.5" y="316.49" text-anchor="middle" font-size="8.3" font-weight="normal" fill="#000" >20</text>
<text x="250.5" y="316.49" text-anchor="middle" font-size="8.3" font-weight="normal" fill="#000" >40</text>
<text x="270.5" y="316.49" text-anchor="middle" font-size="8.3" font-weight="normal" fill="#000" >60</text>
<text x="290.5" y="316.49" text-anchor="middle" font-size="8.3" font-weight="normal" fill="#000" >80</text>
<text x="133" y="216.03" text-anchor="start" font-size="9.8" font-weight="normal" fill="#000" textLength="29" lengthAdjust="spacingAndGlyphs" >CIELAB</text>
<text x="282" y="300.82" text-anchor="middle" font-size="12" font-weight="normal" fill="#000" font-style="italic">a*</text>
<text x="222" y="380.32" text-anchor="middle" font-size="12" font-weight="normal" fill="#000" font-style="italic">b*</text>
<polyline fill="none" stroke="#1010ff" stroke-width="1.35" stroke-linejoin="round" points="226.20,282.80 215.50,274.80 198.50,269.00 186.20,303.70 191.20,321.80 203.10,336.10 222.30,319.80 235.70,304.50"/>
<circle cx="226.20" cy="282.80" r="2.65" fill="#1010ff"/>
<circle cx="215.50" cy="274.80" r="2.65" fill="#1010ff"/>
<circle cx="198.50" cy="269.00" r="2.65" fill="#1010ff"/>
<circle cx="186.20" cy="303.70" r="2.65" fill="#1010ff"/>
<circle cx="191.20" cy="321.80" r="2.65" fill="#1010ff"/>
<circle cx="203.10" cy="336.10" r="2.65" fill="#1010ff"/>
<circle cx="222.30" cy="319.80" r="2.65" fill="#1010ff"/>
<circle cx="235.70" cy="304.50" r="2.65" fill="#1010ff"/>
<polyline fill="none" stroke="#ff1020" stroke-width="1.35" stroke-linejoin="round" points="226.20,282.80 215.50,274.80 198.50,269.00 185.20,302.90 191.20,321.80 202.70,335.80 222.30,319.80 234.50,303.90"/>
<circle cx="226.20" cy="282.80" r="2.65" fill="#ff1020"/>
<circle cx="215.50" cy="274.80" r="2.65" fill="#ff1020"/>
<circle cx="198.50" cy="269.00" r="2.65" fill="#ff1020"/>
<circle cx="185.20" cy="302.90" r="2.65" fill="#ff1020"/>
<circle cx="191.20" cy="321.80" r="2.65" fill="#ff1020"/>
<circle cx="202.70" cy="335.80" r="2.65" fill="#ff1020"/>
<circle cx="222.30" cy="319.80" r="2.65" fill="#ff1020"/>
<circle cx="234.50" cy="303.90" r="2.65" fill="#ff1020"/>
<rect x="343.5" y="188.5" width="44" height="90" fill="#c68d80" stroke="#000" stroke-width="1" shape-rendering="crispEdges"/>
<line x1="343" y1="233.5" x2="354" y2="233.5" stroke="#000" stroke-width="1" shape-rendering="crispEdges"/>
<line x1="377" y1="233.5" x2="388" y2="233.5" stroke="#000" stroke-width="1" shape-rendering="crispEdges"/>
<text x="365" y="185.10" text-anchor="middle" font-size="10" font-weight="normal" fill="#000" textLength="28" lengthAdjust="spacingAndGlyphs" >TCS01</text>
<text x="363.5" y="290.05" text-anchor="middle" font-size="9.3" font-weight="normal" fill="#000" >0.5</text>
<rect x="391.5" y="188.5" width="44" height="90" fill="#a8926f" stroke="#000" stroke-width="1" shape-rendering="crispEdges"/>
<line x1="391" y1="233.5" x2="402" y2="233.5" stroke="#000" stroke-width="1" shape-rendering="crispEdges"/>
<line x1="425" y1="233.5" x2="436" y2="233.5" stroke="#000" stroke-width="1" shape-rendering="crispEdges"/>
<text x="413" y="185.10" text-anchor="middle" font-size="10" font-weight="normal" fill="#000" textLength="28" lengthAdjust="spacingAndGlyphs" >TCS02</text>
<text x="411.5" y="290.05" text-anchor="middle" font-size="9.3" font-weight="normal" fill="#000" >0.5</text>
<rect x="439.5" y="188.5" width="44" height="90" fill="#7a9f5e" stroke="#000" stroke-width="1" shape-rendering="crispEdges"/>
<line x1="439" y1="233.5" x2="450" y2="233.5" stroke="#000" stroke-width="1" shape-rendering="crispEdges"/>
<line x1="473" y1="233.5" x2="484" y2="233.5" stroke="#000" stroke-width="1" shape-rendering="crispEdges"/>
<text x="461" y="185.10" text-anchor="middle" font-size="10" font-weight="normal" fill="#000" textLength="28" lengthAdjust="spacingAndGlyphs" >TCS03</text>
<text x="459.5" y="290.05" text-anchor="middle" font-size="9.3" font-weight="normal" fill="#000" >0.7</text>
<rect x="487.5" y="188.5" width="44" height="90" fill="#3a9a82" stroke="#000" stroke-width="1" shape-rendering="crispEdges"/>
<line x1="487" y1="233.5" x2="498" y2="233.5" stroke="#000" stroke-width="1" shape-rendering="crispEdges"/>
<line x1="521" y1="233.5" x2="532" y2="233.5" stroke="#000" stroke-width="1" shape-rendering="crispEdges"/>
<text x="509" y="185.10" text-anchor="middle" font-size="10" font-weight="normal" fill="#000" textLength="28" lengthAdjust="spacingAndGlyphs" >TCS04</text>
<text x="507.5" y="290.05" text-anchor="middle" font-size="9.3" font-weight="normal" fill="#000" >0.9</text>
<rect x="535.5" y="188.5" width="44" height="90" fill="#529aa5" stroke="#000" stroke-width="1" shape-rendering="crispEdges"/>
<line x1="535" y1="233.5" x2="546" y2="233.5" stroke="#000" stroke-width="1" shape-rendering="crispEdges"/>
<line x1="569" y1="233.5" x2="580" y2="233.5" stroke="#000" stroke-width="1" shape-rendering="crispEdges"/>
<text x="557" y="185.10" text-anchor="middle" font-size="10" font-weight="normal" fill="#000" textLength="28" lengthAdjust="spacingAndGlyphs" >TCS05</text>
<text x="555.5" y="290.05" text-anchor="middle" font-size="9.3" font-weight="normal" fill="#000" >0.8</text>
<rect x="583.5" y="188.5" width="44" height="90" fill="#7393c0" stroke="#000" stroke-width="1" shape-rendering="crispEdges"/>
<line x1="583" y1="233.5" x2="594" y2="233.5" stroke="#000" stroke-width="1" shape-rendering="crispEdges"/>
<line x1="617" y1="233.5" x2="628" y2="233.5" stroke="#000" stroke-width="1" shape-rendering="crispEdges"/>
<text x="605" y="185.10" text-anchor="middle" font-size="10" font-weight="normal" fill="#000" textLength="28" lengthAdjust="spacingAndGlyphs" >TCS06</text>
<text x="603.5" y="290.05" text-anchor="middle" font-size="9.3" font-weight="normal" fill="#000" >1.1</text>
<rect x="631.5" y="188.5" width="44" height="90" fill="#b088b3" stroke="#000" stroke-width="1" shape-rendering="crispEdges"/>
<line x1="631" y1="233.5" x2="642" y2="233.5" stroke="#000" stroke-width="1" shape-rendering="crispEdges"/>
<line x1="665" y1="233.5" x2="676" y2="233.5" stroke="#000" stroke-width="1" shape-rendering="crispEdges"/>
<text x="653" y="185.10" text-anchor="middle" font-size="10" font-weight="normal" fill="#000" textLength="28" lengthAdjust="spacingAndGlyphs" >TCS07</text>
<text x="651.5" y="290.05" text-anchor="middle" font-size="9.3" font-weight="normal" fill="#000" >0.4</text>
<rect x="679.5" y="188.5" width="44" height="90" fill="#dc87a9" stroke="#000" stroke-width="1" shape-rendering="crispEdges"/>
<line x1="679" y1="233.5" x2="690" y2="233.5" stroke="#000" stroke-width="1" shape-rendering="crispEdges"/>
<line x1="713" y1="233.5" x2="724" y2="233.5" stroke="#000" stroke-width="1" shape-rendering="crispEdges"/>
<text x="701" y="185.10" text-anchor="middle" font-size="10" font-weight="normal" fill="#000" textLength="28" lengthAdjust="spacingAndGlyphs" >TCS08</text>
<text x="699.5" y="290.05" text-anchor="middle" font-size="9.3" font-weight="normal" fill="#000" >0.4</text>
<rect x="343.5" y="314.5" width="44" height="90" fill="#e8003f" stroke="#000" stroke-width="1" shape-rendering="crispEdges"/>
<line x1="343" y1="359.5" x2="354" y2="359.5" stroke="#000" stroke-width="1" shape-rendering="crispEdges"/>
<line x1="377" y1="359.5" x2="388" y2="359.5" stroke="#000" stroke-width="1" shape-rendering="crispEdges"/>
<text x="365" y="311.10" text-anchor="middle" font-size="10" font-weight="normal" fill="#000" textLength="28" lengthAdjust="spacingAndGlyphs" >TCS09</text>
<text x="363.5" y="416.05" text-anchor="middle" font-size="9.3" font-weight="normal" fill="#000" >0.8</text>
<text x="350.5" y="355.60" text-anchor="middle" font-size="10" font-weight="normal" fill="#f0e0e0" >!</text>
<text x="350.5" y="400.10" text-anchor="middle" font-size="10" font-weight="normal" fill="#f0e0e0" >!</text>
<rect x="391.5" y="314.5" width="44" height="90" fill="#ebcb6b" stroke="#000" stroke-width="1" shape-rendering="crispEdges"/>
<line x1="391" y1="359.5" x2="402" y2="359.5" stroke="#000" stroke-width="1" shape-rendering="crispEdges"/>
<line x1="425" y1="359.5" x2="436" y2="359.5" stroke="#000" stroke-width="1" shape-rendering="crispEdges"/>
<text x="413" y="311.10" text-anchor="middle" font-size="10" font-weight="normal" fill="#000" textLength="28" lengthAdjust="spacingAndGlyphs" >TCS10</text>
<text x="411.5" y="416.05" text-anchor="middle" font-size="9.3" font-weight="normal" fill="#000" >1.0</text>
<rect x="439.5" y="314.5" width="44" height="90" fill="#00806f" stroke="#000" stroke-width="1" shape-rendering="crispEdges"/>
<line x1="439" y1="359.5" x2="450" y2="359.5" stroke="#000" stroke-width="1" shape-rendering="crispEdges"/>
<line x1="473" y1="359.5" x2="484" y2="359.5" stroke="#000" stroke-width="1" shape-rendering="crispEdges"/>
<text x="461" y="311.10" text-anchor="middle" font-size="10" font-weight="normal" fill="#000" textLength="28" lengthAdjust="spacingAndGlyphs" >TCS11</text>
<text x="459.5" y="416.05" text-anchor="middle" font-size="9.3" font-weight="normal" fill="#000" >1.9</text>
<text x="446.5" y="355.60" text-anchor="middle" font-size="10" font-weight="normal" fill="#f0e0e0" >!</text>
<text x="446.5" y="400.10" text-anchor="middle" font-size="10" font-weight="normal" fill="#f0e0e0" >!</text>
<rect x="487.5" y="314.5" width="44" height="90" fill="#003a8c" stroke="#000" stroke-width="1" shape-rendering="crispEdges"/>
<line x1="487" y1="359.5" x2="498" y2="359.5" stroke="#000" stroke-width="1" shape-rendering="crispEdges"/>
<line x1="521" y1="359.5" x2="532" y2="359.5" stroke="#000" stroke-width="1" shape-rendering="crispEdges"/>
<text x="509" y="311.10" text-anchor="middle" font-size="10" font-weight="normal" fill="#000" textLength="28" lengthAdjust="spacingAndGlyphs" >TCS12</text>
<text x="507.5" y="416.05" text-anchor="middle" font-size="9.3" font-weight="normal" fill="#000" >3.5</text>
<text x="494.5" y="355.60" text-anchor="middle" font-size="10" font-weight="normal" fill="#f0e0e0" >!</text>
<text x="494.5" y="400.10" text-anchor="middle" font-size="10" font-weight="normal" fill="#f0e0e0" >!</text>
<rect x="535.5" y="314.5" width="44" height="90" fill="#f4c3a9" stroke="#000" stroke-width="1" shape-rendering="crispEdges"/>
<line x1="535" y1="359.5" x2="546" y2="359.5" stroke="#000" stroke-width="1" shape-rendering="crispEdges"/>
<line x1="569" y1="359.5" x2="580" y2="359.5" stroke="#000" stroke-width="1" shape-rendering="crispEdges"/>
<text x="557" y="311.10" text-anchor="middle" font-size="10" font-weight="normal" fill="#000" textLength="28" lengthAdjust="spacingAndGlyphs" >TCS13</text>
<text x="555.5" y="416.05" text-anchor="middle" font-size="9.3" font-weight="normal" fill="#000" >0.5</text>
<rect x="583.5" y="314.5" width="44" height="90" fill="#4a6741" stroke="#000" stroke-width="1" shape-rendering="crispEdges"/>
<line x1="583" y1="359.5" x2="594" y2="359.5" stroke="#000" stroke-width="1" shape-rendering="crispEdges"/>
<line x1="617" y1="359.5" x2="628" y2="359.5" stroke="#000" stroke-width="1" shape-rendering="crispEdges"/>
<text x="605" y="311.10" text-anchor="middle" font-size="10" font-weight="normal" fill="#000" textLength="28" lengthAdjust="spacingAndGlyphs" >TCS14</text>
<text x="603.5" y="416.05" text-anchor="middle" font-size="9.3" font-weight="normal" fill="#000" >0.6</text>
<rect x="631.5" y="314.5" width="44" height="90" fill="#f0f0f0" stroke="#000" stroke-width="1" shape-rendering="crispEdges"/>
<line x1="631" y1="359.5" x2="642" y2="359.5" stroke="#000" stroke-width="1" shape-rendering="crispEdges"/>
<line x1="665" y1="359.5" x2="676" y2="359.5" stroke="#000" stroke-width="1" shape-rendering="crispEdges"/>
<text x="653" y="311.10" text-anchor="middle" font-size="10" font-weight="normal" fill="#000" textLength="28" lengthAdjust="spacingAndGlyphs" >Source</text>
<text x="651.5" y="416.05" text-anchor="middle" font-size="9.3" font-weight="normal" fill="#000" >0.0</text>
<text x="318" y="215.30" text-anchor="start" font-size="10" font-weight="bold" fill="#000" textLength="19.5" lengthAdjust="spacingAndGlyphs" >Ref.</text>
<text x="318.5" y="261.60" text-anchor="start" font-size="10" font-weight="bold" fill="#000" textLength="21" lengthAdjust="spacingAndGlyphs" >Test</text>
<text x="316" y="290.30" text-anchor="start" font-size="10" font-weight="normal" fill="#000" >ΔE*ab</text>
<text x="318" y="341.30" text-anchor="start" font-size="10" font-weight="bold" fill="#000" textLength="19.5" lengthAdjust="spacingAndGlyphs" >Ref.</text>
<text x="318.5" y="387.60" text-anchor="start" font-size="10" font-weight="bold" fill="#000" textLength="21" lengthAdjust="spacingAndGlyphs" >Test</text>
<text x="316" y="416.30" text-anchor="start" font-size="10" font-weight="normal" fill="#000" >ΔE*ab</text>
<line x1="755.5" y1="377.5" x2="966.5" y2="377.5" stroke="#c0c0c0" stroke-width="1" shape-rendering="crispEdges"/>
<line x1="755.5" y1="357.5" x2="966.5" y2="357.5" stroke="#c0c0c0" stroke-width="1" shape-rendering="crispEdges"/>
<line x1="755.5" y1="337.5" x2="966.5" y2="337.5" stroke="#c0c0c0" stroke-width="1" shape-rendering="crispEdges"/>
<line x1="755.5" y1="317.5" x2="966.5" y2="317.5" stroke="#c0c0c0" stroke-width="1" shape-rendering="crispEdges"/>
<line x1="755.5" y1="297.5" x2="966.5" y2="297.5" stroke="#c0c0c0" stroke-width="1" shape-rendering="crispEdges"/>
<line x1="755.5" y1="277.5" x2="966.5" y2="277.5" stroke="#c0c0c0" stroke-width="1" shape-rendering="crispEdges"/>
<line x1="755.5" y1="257.5" x2="966.5" y2="257.5" stroke="#c0c0c0" stroke-width="1" shape-rendering="crispEdges"/>
<line x1="755.5" y1="237.5" x2="966.5" y2="237.5" stroke="#c0c0c0" stroke-width="1" shape-rendering="crispEdges"/>
<line x1="755.5" y1="217.5" x2="966.5" y2="217.5" stroke="#c0c0c0" stroke-width="1" shape-rendering="crispEdges"/>
<rect x="760" y="206" width="7" height="191.5" fill="#c68d80" shape-rendering="crispEdges"/>
<rect x="773" y="204" width="7" height="193.5" fill="#a8926f" shape-rendering="crispEdges"/>
<rect x="786" y="200" width="7" height="197.5" fill="#7a9f5e" shape-rendering="crispEdges"/>
<rect x="799" y="211" width="7" height="186.5" fill="#3a9a82" shape-rendering="crispEdges"/>
<rect x="812" y="210" width="7" height="187.5" fill="#529aa5" shape-rendering="crispEdges"/>
<rect x="825" y="217" width="7" height="180.5" fill="#7393c0" shape-rendering="crispEdges"/>
<rect x="838" y="204" width="7" height="193.5" fill="#b088b3" shape-rendering="crispEdges"/>
<rect x="851" y="203" width="7" height="194.5" fill="#dc87a9" shape-rendering="crispEdges"/>
<rect x="864" y="209" width="7" height="188.5" fill="#e8003f" shape-rendering="crispEdges"/>
<rect x="877" y="210" width="7" height="187.5" fill="#ebcb6b" shape-rendering="crispEdges"/>
<rect x="890" y="225" width="7" height="172.5" fill="#00806f" shape-rendering="crispEdges"/>
<rect x="903" y="232" width="7" height="165.5" fill="#003a8c" shape-rendering="crispEdges"/>
<rect x="916" y="208" width="7" height="189.5" fill="#f4c3a9" shape-rendering="crispEdges"/>
<rect x="929" y="202" width="7" height="195.5" fill="#4a6741" shape-rendering="crispEdges"/>
<rect x="955.5" y="207.5" width="6" height="189.5" fill="#fff" stroke="#000" stroke-width="1" shape-rendering="crispEdges"/>
<rect x="755.5" y="197.5" width="211.0" height="200.0" fill="none" stroke="#000" stroke-width="1" shape-rendering="crispEdges"/>
<text x="752.2" y="400.47" text-anchor="end" font-size="10.2" font-weight="normal" fill="#000" >0</text>
<text x="752.2" y="380.47" text-anchor="end" font-size="10.2" font-weight="normal" fill="#000" textLength="10.1" lengthAdjust="spacingAndGlyphs" >10</text>
<text x="752.2" y="360.47" text-anchor="end" font-size="10.2" font-weight="normal" fill="#000" textLength="10.1" lengthAdjust="spacingAndGlyphs" >20</text>
<text x="752.2" y="340.47" text-anchor="end" font-size="10.2" font-weight="normal" fill="#000" textLength="10.1" lengthAdjust="spacingAndGlyphs" >30</text>
<text x="752.2" y="320.47" text-anchor="end" font-size="10.2" font-weight="normal" fill="#000" textLength="10.1" lengthAdjust="spacingAndGlyphs" >40</text>
<text x="752.2" y="300.47" text-anchor="end" font-size="10.2" font-weight="normal" fill="#000" textLength="10.1" lengthAdjust="spacingAndGlyphs" >50</text>
<text x="752.2" y="280.47" text-anchor="end" font-size="10.2" font-weight="normal" fill="#000" textLength="10.1" lengthAdjust="spacingAndGlyphs" >60</text>
<text x="752.2" y="260.47" text-anchor="end" font-size="10.2" font-weight="normal" fill="#000" textLength="10.1" lengthAdjust="spacingAndGlyphs" >70</text>
<text x="752.2" y="240.58" text-anchor="end" font-size="10.5" font-weight="bold" fill="#000" textLength="13.5" lengthAdjust="spacingAndGlyphs" >80</text>
<text x="752.2" y="220.47" text-anchor="end" font-size="10.2" font-weight="normal" fill="#000" textLength="10.1" lengthAdjust="spacingAndGlyphs" >90</text>
<text x="752.2" y="200.47" text-anchor="end" font-size="10.2" font-weight="normal" fill="#000" textLength="15.149999999999999" lengthAdjust="spacingAndGlyphs" >100</text>
<text x="858.5" y="189.96" text-anchor="middle" font-size="11" font-weight="normal" fill="#000" textLength="53.5" lengthAdjust="spacingAndGlyphs" >Special CRI</text>
<text x="763.1" y="404.92" text-anchor="end" font-size="9.5" font-weight="normal" fill="#000" transform="rotate(-90 763.1 401.5)" stroke="#000" stroke-width="0.25" >R1</text>
<text x="776.1" y="404.92" text-anchor="end" font-size="9.5" font-weight="normal" fill="#000" transform="rotate(-90 776.1 401.5)" stroke="#000" stroke-width="0.25" >R2</text>
<text x="789.1" y="404.92" text-anchor="end" font-size="9.5" font-weight="normal" fill="#000" transform="rotate(-90 789.1 401.5)" stroke="#000" stroke-width="0.25" >R3</text>
<text x="802.1" y="404.92" text-anchor="end" font-size="9.5" font-weight="normal" fill="#000" transform="rotate(-90 802.1 401.5)" stroke="#000" stroke-width="0.25" >R4</text>
<text x="815.1" y="404.92" text-anchor="end" font-size="9.5" font-weight="normal" fill="#000" transform="rotate(-90 815.1 401.5)" stroke="#000" stroke-width="0.25" >R5</text>
<text x="828.1" y="404.92" text-anchor="end" font-size="9.5" font-weight="normal" fill="#000" transform="rotate(-90 828.1 401.5)" stroke="#000" stroke-width="0.25" >R6</text>
<text x="841.1" y="404.92" text-anchor="end" font-size="9.5" font-weight="normal" fill="#000" transform="rotate(-90 841.1 401.5)" stroke="#000" stroke-width="0.25" >R7</text>
<text x="854.1" y="404.92" text-anchor="end" font-size="9.5" font-weight="normal" fill="#000" transform="rotate(-90 854.1 401.5)" stroke="#000" stroke-width="0.25" >R8</text>
<text x="867.1" y="404.92" text-anchor="end" font-size="9.5" font-weight="normal" fill="#000" transform="rotate(-90 867.1 401.5)" stroke="#000" stroke-width="0.25" >R9</text>
<text x="880.1" y="404.92" text-anchor="end" font-size="9.5" font-weight="normal" fill="#000" transform="rotate(-90 880.1 401.5)" stroke="#000" stroke-width="0.25" >R10</text>
<text x="893.1" y="404.92" text-anchor="end" font-size="9.5" font-weight="normal" fill="#000" transform="rotate(-90 893.1 401.5)" stroke="#000" stroke-width="0.25" >R11</text>
<text x="906.1" y="404.92" text-anchor="end" font-size="9.5" font-weight="normal" fill="#000" transform="rotate(-90 906.1 401.5)" stroke="#000" stroke-width="0.25" >R12</text>
<text x="919.1" y="404.92" text-anchor="end" font-size="9.5" font-weight="normal" fill="#000" transform="rotate(-90 919.1 401.5)" stroke="#000" stroke-width="0.25" >R13</text>
<text x="932.1" y="404.92" text-anchor="end" font-size="9.5" font-weight="normal" fill="#000" transform="rotate(-90 932.1 401.5)" stroke="#000" stroke-width="0.25" >R14</text>
<text x="958.2" y="404.92" text-anchor="end" font-size="9.5" font-weight="bold" fill="#000" transform="rotate(-90 958.2 401.5)" stroke="#000" stroke-width="0.25" >Ra</text>
<path d="M194.0 445.5 L198.5 450.0 L203.0 445.5" stroke="#444" stroke-width="1" fill="none"/>
<circle cx="27.5" cy="504.5" r="6" fill="#fff" stroke="#333" stroke-width="1"/>
<circle cx="27.5" cy="525.5" r="6" fill="#fff" stroke="#333" stroke-width="1"/>
<circle cx="27.5" cy="525.5" r="3.2" fill="#333"/>
<circle cx="27.5" cy="657.5" r="6" fill="#fff" stroke="#333" stroke-width="1"/>
<circle cx="27.5" cy="657.5" r="3.2" fill="#333"/>
<circle cx="27.5" cy="678.5" r="6" fill="#fff" stroke="#333" stroke-width="1"/>
<line x1="157.5" y1="483.5" x2="157.5" y2="643.5" stroke="#b8b8b8" stroke-width="1" shape-rendering="crispEdges"/>
<line x1="130.5" y1="616.5" x2="290.5" y2="616.5" stroke="#b8b8b8" stroke-width="1" shape-rendering="crispEdges"/>
<line x1="183.5" y1="483.5" x2="183.5" y2="643.5" stroke="#b8b8b8" stroke-width="1" shape-rendering="crispEdges"/>
<line x1="130.5" y1="590.5" x2="290.5" y2="590.5" stroke="#b8b8b8" stroke-width="1" shape-rendering="crispEdges"/>
<line x1="237.5" y1="483.5" x2="237.5" y2="643.5" stroke="#b8b8b8" stroke-width="1" shape-rendering="crispEdges"/>
<line x1="130.5" y1="536.5" x2="290.5" y2="536.5" stroke="#b8b8b8" stroke-width="1" shape-rendering="crispEdges"/>
<line x1="263.5" y1="483.5" x2="263.5" y2="643.5" stroke="#b8b8b8" stroke-width="1" shape-rendering="crispEdges"/>
<line x1="130.5" y1="510.5" x2="290.5" y2="510.5" stroke="#b8b8b8" stroke-width="1" shape-rendering="crispEdges"/>
<line x1="210.5" y1="483" x2="210.5" y2="644" stroke="#808080" stroke-width="1" shape-rendering="crispEdges"/>
<line x1="130" y1="563.5" x2="291" y2="563.5" stroke="#808080" stroke-width="1" shape-rendering="crispEdges"/>
<rect x="130.5" y="483.5" width="160" height="160" fill="none" stroke="#808080" stroke-width="1" shape-rendering="crispEdges"/>
<line x1="207.5" y1="643.5" x2="210.5" y2="643.5" stroke="#606060" stroke-width="1" shape-rendering="crispEdges"/>
<text x="206.5" y="645.99" text-anchor="end" font-size="8.3" font-weight="normal" fill="#000" >-30</text>
<text x="128.4" y="576.49" text-anchor="middle" font-size="8.3" font-weight="normal" fill="#000" >-30</text>
<line x1="207.5" y1="616.5" x2="210.5" y2="616.5" stroke="#606060" stroke-width="1" shape-rendering="crispEdges"/>
<text x="206.5" y="618.99" text-anchor="end" font-size="8.3" font-weight="normal" fill="#000" >-20</text>
<text x="155.4" y="576.49" text-anchor="middle" font-size="8.3" font-weight="normal" fill="#000" >-20</text>
<line x1="207.5" y1="590.5" x2="210.5" y2="590.5" stroke="#606060" stroke-width="1" shape-rendering="crispEdges"/>
<text x="206.5" y="592.99" text-anchor="end" font-size="8.3" font-weight="normal" fill="#000" >-10</text>
<text x="182.4" y="576.49" text-anchor="middle" font-size="8.3" font-weight="normal" fill="#000" >-10</text>
<line x1="207.5" y1="563.5" x2="210.5" y2="563.5" stroke="#606060" stroke-width="1" shape-rendering="crispEdges"/>
<text x="206.5" y="565.99" text-anchor="end" font-size="8.3" font-weight="normal" fill="#000" >0</text>
<text x="210" y="576.49" text-anchor="middle" font-size="8.3" font-weight="normal" fill="#000" >0</text>
<line x1="207.5" y1="536.5" x2="210.5" y2="536.5" stroke="#606060" stroke-width="1" shape-rendering="crispEdges"/>
<text x="206.5" y="538.99" text-anchor="end" font-size="8.3" font-weight="normal" fill="#000" >10</text>
<text x="237" y="576.49" text-anchor="middle" font-size="8.3" font-weight="normal" fill="#000" >10</text>
<line x1="207.5" y1="510.5" x2="210.5" y2="510.5" stroke="#606060" stroke-width="1" shape-rendering="crispEdges"/>
<text x="206.5" y="512.99" text-anchor="end" font-size="8.3" font-weight="normal" fill="#000" >20</text>
<text x="264" y="576.49" text-anchor="middle" font-size="8.3" font-weight="normal" fill="#000" >20</text>
<line x1="207.5" y1="483.5" x2="210.5" y2="483.5" stroke="#606060" stroke-width="1" shape-rendering="crispEdges"/>
<text x="206.5" y="485.99" text-anchor="end" font-size="8.3" font-weight="normal" fill="#000" >30</text>
<text x="290" y="576.49" text-anchor="middle" font-size="8.3" font-weight="normal" fill="#000" >30</text>
<text x="133" y="496.03" text-anchor="start" font-size="9.8" font-weight="normal" fill="#000" textLength="44" lengthAdjust="spacingAndGlyphs" >CAM02UCS</text>
<text x="276" y="567.5" font-size="10.5" font-style="italic">a<tspan dy="-4" font-size="8">′</tspan><tspan dy="6.5" dx="-3" font-size="7">M</tspan></text>
<text x="214.5" y="640.5" font-size="10.5" font-style="italic">b<tspan dy="-4" font-size="8">′</tspan><tspan dy="6.5" dx="-3" font-size="7">M</tspan></text>
<polygon fill="none" stroke="#1010ff" stroke-width="1.35" stroke-linejoin="round" points="281.17,547.77 264.10,526.97 245.17,500.03 217.43,517.63 204.37,529.63 182.77,527.77 161.17,534.97 160.90,555.23 143.03,580.83 161.17,600.57 177.70,614.70 200.63,611.77 219.03,595.77 236.37,607.50 252.10,591.50 265.17,573.37"/>
<circle cx="281.17" cy="547.77" r="2.65" fill="#1010ff"/>
<circle cx="264.10" cy="526.97" r="2.65" fill="#1010ff"/>
<circle cx="245.17" cy="500.03" r="2.65" fill="#1010ff"/>
<circle cx="217.43" cy="517.63" r="2.65" fill="#1010ff"/>
<circle cx="204.37" cy="529.63" r="2.65" fill="#1010ff"/>
<circle cx="182.77" cy="527.77" r="2.65" fill="#1010ff"/>
<circle cx="161.17" cy="534.97" r="2.65" fill="#1010ff"/>
<circle cx="160.90" cy="555.23" r="2.65" fill="#1010ff"/>
<circle cx="143.03" cy="580.83" r="2.65" fill="#1010ff"/>
<circle cx="161.17" cy="600.57" r="2.65" fill="#1010ff"/>
<circle cx="177.70" cy="614.70" r="2.65" fill="#1010ff"/>
<circle cx="200.63" cy="611.77" r="2.65" fill="#1010ff"/>
<circle cx="219.03" cy="595.77" r="2.65" fill="#1010ff"/>
<circle cx="236.37" cy="607.50" r="2.65" fill="#1010ff"/>
<circle cx="252.10" cy="591.50" r="2.65" fill="#1010ff"/>
<circle cx="265.17" cy="573.37" r="2.65" fill="#1010ff"/>
<polygon fill="none" stroke="#ff1020" stroke-width="1.35" stroke-linejoin="round" points="281.17,547.77 264.10,526.97 247.30,500.83 218.50,518.43 204.37,529.63 180.63,528.83 159.83,534.97 158.77,555.23 140.63,580.83 158.77,600.57 175.83,614.70 196.63,611.77 214.50,596.83 231.30,609.90 250.23,592.03 262.23,574.43"/>
<circle cx="281.17" cy="547.77" r="2.65" fill="#ff1020"/>
<circle cx="264.10" cy="526.97" r="2.65" fill="#ff1020"/>
<circle cx="247.30" cy="500.83" r="2.65" fill="#ff1020"/>
<circle cx="218.50" cy="518.43" r="2.65" fill="#ff1020"/>
<circle cx="204.37" cy="529.63" r="2.65" fill="#ff1020"/>
<circle cx="180.63" cy="528.83" r="2.65" fill="#ff1020"/>
<circle cx="159.83" cy="534.97" r="2.65" fill="#ff1020"/>
<circle cx="158.77" cy="555.23" r="2.65" fill="#ff1020"/>
<circle cx="140.63" cy="580.83" r="2.65" fill="#ff1020"/>
<circle cx="158.77" cy="600.57" r="2.65" fill="#ff1020"/>
<circle cx="175.83" cy="614.70" r="2.65" fill="#ff1020"/>
<circle cx="196.63" cy="611.77" r="2.65" fill="#ff1020"/>
<circle cx="214.50" cy="596.83" r="2.65" fill="#ff1020"/>
<circle cx="231.30" cy="609.90" r="2.65" fill="#ff1020"/>
<circle cx="250.23" cy="592.03" r="2.65" fill="#ff1020"/>
<circle cx="262.23" cy="574.43" r="2.65" fill="#ff1020"/>
<text x="209.5" y="658.26" text-anchor="middle" font-size="11" font-weight="normal" fill="#000" textLength="131" lengthAdjust="spacingAndGlyphs" >Avg. Chromaticity - 16 bins</text>
<text x="209.5" y="669.15" text-anchor="middle" font-size="9.3" font-weight="normal" fill="#000" textLength="52" lengthAdjust="spacingAndGlyphs" >(gamut area)</text>
<line x1="320.5" y1="642.5" x2="531.5" y2="642.5" stroke="#c0c0c0" stroke-width="1" shape-rendering="crispEdges"/>
<line x1="320.5" y1="622.5" x2="531.5" y2="622.5" stroke="#c0c0c0" stroke-width="1" shape-rendering="crispEdges"/>
<line x1="320.5" y1="602.5" x2="531.5" y2="602.5" stroke="#c0c0c0" stroke-width="1" shape-rendering="crispEdges"/>
<line x1="320.5" y1="582.5" x2="531.5" y2="582.5" stroke="#c0c0c0" stroke-width="1" shape-rendering="crispEdges"/>
<line x1="320.5" y1="562.5" x2="531.5" y2="562.5" stroke="#c0c0c0" stroke-width="1" shape-rendering="crispEdges"/>
<line x1="320.5" y1="542.5" x2="531.5" y2="542.5" stroke="#c0c0c0" stroke-width="1" shape-rendering="crispEdges"/>
<line x1="320.5" y1="522.5" x2="531.5" y2="522.5" stroke="#c0c0c0" stroke-width="1" shape-rendering="crispEdges"/>
<line x1="320.5" y1="502.5" x2="531.5" y2="502.5" stroke="#c0c0c0" stroke-width="1" shape-rendering="crispEdges"/>
<line x1="320.5" y1="482.5" x2="531.5" y2="482.5" stroke="#c0c0c0" stroke-width="1" shape-rendering="crispEdges"/>
<rect x="325" y="468" width="7" height="194.5" fill="#c26070" shape-rendering="crispEdges"/>
<rect x="338" y="469" width="7" height="193.5" fill="#d07868" shape-rendering="crispEdges"/>
<rect x="351" y="474" width="7" height="188.5" fill="#f9aa68" shape-rendering="crispEdges"/>
<rect x="364" y="469" width="7" height="193.5" fill="#d8c088" shape-rendering="crispEdges"/>
<rect x="377" y="469" width="7" height="193.5" fill="#9a9a78" shape-rendering="crispEdges"/>
<rect x="390" y="473" width="7" height="189.5" fill="#6e9860" shape-rendering="crispEdges"/>
<rect x="403" y="469" width="7" height="193.5" fill="#529068" shape-rendering="crispEdges"/>
<rect x="416" y="473" width="7" height="189.5" fill="#52957a" shape-rendering="crispEdges"/>
<rect x="429" y="472" width="7" height="190.5" fill="#5ab0aa" shape-rendering="crispEdges"/>
<rect x="442" y="474" width="7" height="188.5" fill="#6498a0" shape-rendering="crispEdges"/>
<rect x="455" y="476" width="7" height="186.5" fill="#6890b0" shape-rendering="crispEdges"/>
<rect x="468" y="482" width="7" height="180.5" fill="#5e6488" shape-rendering="crispEdges"/>
<rect x="481" y="485" width="7" height="177.5" fill="#a49cb4" shape-rendering="crispEdges"/>
<rect x="494" y="490" width="7" height="172.5" fill="#9880a8" shape-rendering="crispEdges"/>
<rect x="507" y="474" width="7" height="188.5" fill="#906088" shape-rendering="crispEdges"/>
<rect x="520" y="473" width="7" height="189.5" fill="#b87c94" shape-rendering="crispEdges"/>
<rect x="320.5" y="462.5" width="211.0" height="200.0" fill="none" stroke="#000" stroke-width="1" shape-rendering="crispEdges"/>
<text x="317.2" y="665.47" text-anchor="end" font-size="10.2" font-weight="normal" fill="#000" >0</text>
<text x="317.2" y="645.47" text-anchor="end" font-size="10.2" font-weight="normal" fill="#000" textLength="10.1" lengthAdjust="spacingAndGlyphs" >10</text>
<text x="317.2" y="625.47" text-anchor="end" font-size="10.2" font-weight="normal" fill="#000" textLength="10.1" lengthAdjust="spacingAndGlyphs" >20</text>
<text x="317.2" y="605.47" text-anchor="end" font-size="10.2" font-weight="normal" fill="#000" textLength="10.1" lengthAdjust="spacingAndGlyphs" >30</text>
<text x="317.2" y="585.47" text-anchor="end" font-size="10.2" font-weight="normal" fill="#000" textLength="10.1" lengthAdjust="spacingAndGlyphs" >40</text>
<text x="317.2" y="565.47" text-anchor="end" font-size="10.2" font-weight="normal" fill="#000" textLength="10.1" lengthAdjust="spacingAndGlyphs" >50</text>
<text x="317.2" y="545.47" text-anchor="end" font-size="10.2" font-weight="normal" fill="#000" textLength="10.1" lengthAdjust="spacingAndGlyphs" >60</text>
<text x="317.2" y="525.47" text-anchor="end" font-size="10.2" font-weight="normal" fill="#000" textLength="10.1" lengthAdjust="spacingAndGlyphs" >70</text>
<text x="317.2" y="505.58" text-anchor="end" font-size="10.5" font-weight="bold" fill="#000" textLength="13.5" lengthAdjust="spacingAndGlyphs" >80</text>
<text x="317.2" y="485.47" text-anchor="end" font-size="10.2" font-weight="normal" fill="#000" textLength="10.1" lengthAdjust="spacingAndGlyphs" >90</text>
<text x="317.2" y="465.47" text-anchor="end" font-size="10.2" font-weight="normal" fill="#000" textLength="15.149999999999999" lengthAdjust="spacingAndGlyphs" >100</text>
<text x="423.5" y="454.96" text-anchor="middle" font-size="11" font-weight="normal" fill="#000" textLength="145" lengthAdjust="spacingAndGlyphs" >Color Fidelity by Hue Angle Bin</text>
<text x="327.9" y="668.35" text-anchor="end" font-size="9.3" font-weight="normal" fill="#000" transform="rotate(-90 327.9 665)" stroke="#000" stroke-width="0.25" textLength="19" lengthAdjust="spacingAndGlyphs" >Bin 1</text>
<text x="340.9" y="668.35" text-anchor="end" font-size="9.3" font-weight="normal" fill="#000" transform="rotate(-90 340.9 665)" stroke="#000" stroke-width="0.25" textLength="19" lengthAdjust="spacingAndGlyphs" >Bin 2</text>
<text x="353.9" y="668.35" text-anchor="end" font-size="9.3" font-weight="normal" fill="#000" transform="rotate(-90 353.9 665)" stroke="#000" stroke-width="0.25" textLength="19" lengthAdjust="spacingAndGlyphs" >Bin 3</text>
<text x="366.9" y="668.35" text-anchor="end" font-size="9.3" font-weight="normal" fill="#000" transform="rotate(-90 366.9 665)" stroke="#000" stroke-width="0.25" textLength="19" lengthAdjust="spacingAndGlyphs" >Bin 4</text>
<text x="379.9" y="668.35" text-anchor="end" font-size="9.3" font-weight="normal" fill="#000" transform="rotate(-90 379.9 665)" stroke="#000" stroke-width="0.25" textLength="19" lengthAdjust="spacingAndGlyphs" >Bin 5</text>
<text x="392.9" y="668.35" text-anchor="end" font-size="9.3" font-weight="normal" fill="#000" transform="rotate(-90 392.9 665)" stroke="#000" stroke-width="0.25" textLength="19" lengthAdjust="spacingAndGlyphs" >Bin 6</text>
<text x="405.9" y="668.35" text-anchor="end" font-size="9.3" font-weight="normal" fill="#000" transform="rotate(-90 405.9 665)" stroke="#000" stroke-width="0.25" textLength="19" lengthAdjust="spacingAndGlyphs" >Bin 7</text>
<text x="418.9" y="668.35" text-anchor="end" font-size="9.3" font-weight="normal" fill="#000" transform="rotate(-90 418.9 665)" stroke="#000" stroke-width="0.25" textLength="19" lengthAdjust="spacingAndGlyphs" >Bin 8</text>
<text x="431.9" y="668.35" text-anchor="end" font-size="9.3" font-weight="normal" fill="#000" transform="rotate(-90 431.9 665)" stroke="#000" stroke-width="0.25" textLength="19" lengthAdjust="spacingAndGlyphs" >Bin 9</text>
<text x="444.9" y="668.35" text-anchor="end" font-size="9.3" font-weight="normal" fill="#000" transform="rotate(-90 444.9 665)" stroke="#000" stroke-width="0.25" textLength="24" lengthAdjust="spacingAndGlyphs" >Bin 10</text>
<text x="457.9" y="668.35" text-anchor="end" font-size="9.3" font-weight="normal" fill="#000" transform="rotate(-90 457.9 665)" stroke="#000" stroke-width="0.25" textLength="24" lengthAdjust="spacingAndGlyphs" >Bin 11</text>
<text x="470.9" y="668.35" text-anchor="end" font-size="9.3" font-weight="normal" fill="#000" transform="rotate(-90 470.9 665)" stroke="#000" stroke-width="0.25" textLength="24" lengthAdjust="spacingAndGlyphs" >Bin 12</text>
<text x="483.9" y="668.35" text-anchor="end" font-size="9.3" font-weight="normal" fill="#000" transform="rotate(-90 483.9 665)" stroke="#000" stroke-width="0.25" textLength="24" lengthAdjust="spacingAndGlyphs" >Bin 13</text>
<text x="496.9" y="668.35" text-anchor="end" font-size="9.3" font-weight="normal" fill="#000" transform="rotate(-90 496.9 665)" stroke="#000" stroke-width="0.25" textLength="24" lengthAdjust="spacingAndGlyphs" >Bin 14</text>
<text x="509.9" y="668.35" text-anchor="end" font-size="9.3" font-weight="normal" fill="#000" transform="rotate(-90 509.9 665)" stroke="#000" stroke-width="0.25" textLength="24" lengthAdjust="spacingAndGlyphs" >Bin 15</text>
<text x="522.9" y="668.35" text-anchor="end" font-size="9.3" font-weight="normal" fill="#000" transform="rotate(-90 522.9 665)" stroke="#000" stroke-width="0.25" textLength="24" lengthAdjust="spacingAndGlyphs" >Bin 16</text>
<line x1="586.5" y1="445" x2="586.5" y2="680" stroke="#b8b8b8" stroke-width="1" shape-rendering="crispEdges"/>
<line x1="547" y1="484.5" x2="782" y2="484.5" stroke="#b8b8b8" stroke-width="1" shape-rendering="crispEdges"/>
<line x1="625.5" y1="445" x2="625.5" y2="680" stroke="#b8b8b8" stroke-width="1" shape-rendering="crispEdges"/>
<line x1="547" y1="523.5" x2="782" y2="523.5" stroke="#b8b8b8" stroke-width="1" shape-rendering="crispEdges"/>
<line x1="664.5" y1="445" x2="664.5" y2="680" stroke="#808080" stroke-width="1" shape-rendering="crispEdges"/>
<line x1="547" y1="562.5" x2="782" y2="562.5" stroke="#808080" stroke-width="1" shape-rendering="crispEdges"/>
<line x1="703.5" y1="445" x2="703.5" y2="680" stroke="#b8b8b8" stroke-width="1" shape-rendering="crispEdges"/>
<line x1="547" y1="601.5" x2="782" y2="601.5" stroke="#b8b8b8" stroke-width="1" shape-rendering="crispEdges"/>
<line x1="742.5" y1="445" x2="742.5" y2="680" stroke="#b8b8b8" stroke-width="1" shape-rendering="crispEdges"/>
<line x1="547" y1="640.5" x2="782" y2="640.5" stroke="#b8b8b8" stroke-width="1" shape-rendering="crispEdges"/>
<rect x="547.5" y="445.5" width="234" height="234" fill="none" stroke="#808080" stroke-width="1" shape-rendering="crispEdges"/>
<line x1="625.5" y1="560.5" x2="625.5" y2="563.5" stroke="#808080" stroke-width="1" shape-rendering="crispEdges"/>
<line x1="662.5" y1="523.5" x2="665.5" y2="523.5" stroke="#808080" stroke-width="1" shape-rendering="crispEdges"/>
<line x1="703.5" y1="560.5" x2="703.5" y2="563.5" stroke="#808080" stroke-width="1" shape-rendering="crispEdges"/>
<line x1="662.5" y1="601.5" x2="665.5" y2="601.5" stroke="#808080" stroke-width="1" shape-rendering="crispEdges"/>
<circle cx="665.0" cy="562.9" r="78" fill="none" stroke="#1010ff" stroke-width="1.8"/>
<polygon fill="none" stroke="#ff1020" stroke-width="1.9" stroke-linejoin="round" points="742.1,562.2 741.6,554.0 740.2,545.9 738.0,538.0 735.0,530.4 731.2,523.2 726.7,516.4 721.5,510.1 715.6,504.4 709.3,499.3 702.4,495.0 695.2,491.3 687.6,488.4 679.7,486.3 671.7,485.0 663.6,484.5 655.5,484.9 647.4,486.1 639.5,488.1 631.9,490.9 624.5,494.5 617.6,498.9 611.2,504.0 605.3,509.7 600.1,516.1 595.6,522.9 591.8,530.2 588.8,537.9 586.7,545.9 585.5,554.0 585.1,562.2 585.6,570.4 587.0,578.5 589.2,586.4 592.2,594.0 596.0,601.2 600.5,608.0 605.7,614.3 611.6,620.0 617.9,625.1 624.8,629.4 632.0,633.1 639.6,636.0 647.5,638.1 655.5,639.4 663.6,639.9 671.7,639.5 679.8,638.3 687.7,636.3 695.3,633.5 702.7,629.9 709.6,625.5 716.0,620.4 721.9,614.7 727.1,608.3 731.6,601.5 735.4,594.2 738.4,586.5 740.5,578.5 741.7,570.4"/>
<polygon fill="#e04050" points="743.4,546.8 739.9,549.8 739.0,545.4"/>
<polygon fill="#f09050" points="731.4,517.8 729.2,521.9 726.8,518.2"/>
<polygon fill="#f0b040" points="709.2,495.6 708.8,500.2 705.1,497.8"/>
<polygon fill="#d8c050" points="680.2,483.6 681.6,488.0 677.2,487.1"/>
<polygon fill="#80a860" points="648.8,483.6 651.8,487.1 647.4,488.0"/>
<polygon fill="#50a070" points="619.8,495.6 623.9,497.8 620.2,500.2"/>
<polygon fill="#30a088" points="597.6,517.8 602.2,518.2 599.8,521.9"/>
<polygon fill="#30a8a0" points="585.6,546.8 590.0,545.4 589.1,549.8"/>
<polygon fill="#30a0b0" points="585.6,578.2 589.1,575.2 590.0,579.6"/>
<polygon fill="#4088b0" points="597.6,607.2 599.8,603.1 602.2,606.8"/>
<polygon fill="#5070a8" points="619.8,629.4 620.2,624.8 623.9,627.2"/>
<polygon fill="#6068a0" points="648.8,641.4 647.4,637.0 651.8,637.9"/>
<polygon fill="#7870a8" points="680.2,641.4 677.2,637.9 681.6,637.0"/>
<polygon fill="#9068a0" points="709.2,629.4 705.1,627.2 708.8,624.8"/>
<polygon fill="#a86098" points="731.4,607.2 726.8,606.8 729.2,603.1"/>
<polygon fill="#c06088" points="743.4,578.2 739.0,579.6 739.9,575.2"/>
<text x="664.5" y="458.16" text-anchor="middle" font-size="11" font-weight="normal" fill="#000" textLength="99" lengthAdjust="spacingAndGlyphs" >Color Vector Graphic</text>
<polygon fill="#d9d9d9" points="816.5,446.5 961.5,446.5 961.5,562.5"/>
<polygon fill="#d9d9d9" points="816.5,678.5 961.5,678.5 961.5,562.5"/>
<line x1="845.5" y1="678.5" x2="845.5" y2="446.5" stroke="#c4c4c4" stroke-width="1" shape-rendering="crispEdges"/>
<line x1="874.5" y1="678.5" x2="874.5" y2="446.5" stroke="#c4c4c4" stroke-width="1" shape-rendering="crispEdges"/>
<line x1="903.5" y1="678.5" x2="903.5" y2="446.5" stroke="#c4c4c4" stroke-width="1" shape-rendering="crispEdges"/>
<line x1="932.5" y1="678.5" x2="932.5" y2="446.5" stroke="#c4c4c4" stroke-width="1" shape-rendering="crispEdges"/>
<line x1="816.5" y1="649.5" x2="961.5" y2="649.5" stroke="#c4c4c4" stroke-width="1" shape-rendering="crispEdges"/>
<line x1="816.5" y1="620.5" x2="961.5" y2="620.5" stroke="#c4c4c4" stroke-width="1" shape-rendering="crispEdges"/>
<line x1="816.5" y1="591.5" x2="961.5" y2="591.5" stroke="#c4c4c4" stroke-width="1" shape-rendering="crispEdges"/>
<line x1="816.5" y1="562.5" x2="961.5" y2="562.5" stroke="#c4c4c4" stroke-width="1" shape-rendering="crispEdges"/>
<line x1="816.5" y1="533.5" x2="961.5" y2="533.5" stroke="#c4c4c4" stroke-width="1" shape-rendering="crispEdges"/>
<line x1="816.5" y1="504.5" x2="961.5" y2="504.5" stroke="#c4c4c4" stroke-width="1" shape-rendering="crispEdges"/>
<line x1="816.5" y1="475.5" x2="961.5" y2="475.5" stroke="#c4c4c4" stroke-width="1" shape-rendering="crispEdges"/>
<polyline fill="none" stroke="#fff" stroke-width="1" points="816.5,446.5 961.5,562.5 816.5,678.5"/>
<polygon fill="#bebebe" points="845.5,446.5 961.5,446.5 961.5,562.5"/>
<polygon fill="#bebebe" points="845.5,678.5 961.5,678.5 961.5,562.5"/>
<rect x="816.5" y="446.5" width="145.0" height="232.0" fill="none" stroke="#000" stroke-width="1" shape-rendering="crispEdges"/>
<line x1="816.5" y1="678.5" x2="820.0" y2="678.5" stroke="#000" stroke-width="1" shape-rendering="crispEdges"/>
<text x="813.2" y="681.47" text-anchor="end" font-size="10.2" font-weight="normal" fill="#000" textLength="9.8" lengthAdjust="spacingAndGlyphs" >60</text>
<line x1="816.5" y1="649.5" x2="820.0" y2="649.5" stroke="#000" stroke-width="1" shape-rendering="crispEdges"/>
<text x="813.2" y="652.47" text-anchor="end" font-size="10.2" font-weight="normal" fill="#000" textLength="9.8" lengthAdjust="spacingAndGlyphs" >70</text>
<line x1="816.5" y1="620.5" x2="820.0" y2="620.5" stroke="#000" stroke-width="1" shape-rendering="crispEdges"/>
<text x="813.2" y="623.47" text-anchor="end" font-size="10.2" font-weight="normal" fill="#000" textLength="9.8" lengthAdjust="spacingAndGlyphs" >80</text>
<line x1="816.5" y1="591.5" x2="820.0" y2="591.5" stroke="#000" stroke-width="1" shape-rendering="crispEdges"/>
<text x="813.2" y="594.47" text-anchor="end" font-size="10.2" font-weight="normal" fill="#000" textLength="9.8" lengthAdjust="spacingAndGlyphs" >90</text>
<line x1="816.5" y1="562.5" x2="820.0" y2="562.5" stroke="#000" stroke-width="1" shape-rendering="crispEdges"/>
<text x="813.2" y="565.58" text-anchor="end" font-size="10.5" font-weight="bold" fill="#000" textLength="19.5" lengthAdjust="spacingAndGlyphs" >100</text>
<line x1="816.5" y1="533.5" x2="820.0" y2="533.5" stroke="#000" stroke-width="1" shape-rendering="crispEdges"/>
<text x="813.2" y="536.47" text-anchor="end" font-size="10.2" font-weight="normal" fill="#000" textLength="14.700000000000001" lengthAdjust="spacingAndGlyphs" >110</text>
<line x1="816.5" y1="504.5" x2="820.0" y2="504.5" stroke="#000" stroke-width="1" shape-rendering="crispEdges"/>
<text x="813.2" y="507.47" text-anchor="end" font-size="10.2" font-weight="normal" fill="#000" textLength="14.700000000000001" lengthAdjust="spacingAndGlyphs" >120</text>
<line x1="816.5" y1="475.5" x2="820.0" y2="475.5" stroke="#000" stroke-width="1" shape-rendering="crispEdges"/>
<text x="813.2" y="478.47" text-anchor="end" font-size="10.2" font-weight="normal" fill="#000" textLength="14.700000000000001" lengthAdjust="spacingAndGlyphs" >130</text>
<line x1="816.5" y1="446.5" x2="820.0" y2="446.5" stroke="#000" stroke-width="1" shape-rendering="crispEdges"/>
<text x="813.2" y="449.47" text-anchor="end" font-size="10.2" font-weight="normal" fill="#000" textLength="14.700000000000001" lengthAdjust="spacingAndGlyphs" >140</text>
<line x1="816.5" y1="675.0" x2="816.5" y2="678.5" stroke="#000" stroke-width="1" shape-rendering="crispEdges"/>
<text x="816.5" y="690.17" text-anchor="middle" font-size="10.2" font-weight="normal" fill="#000" textLength="9.9" lengthAdjust="spacingAndGlyphs" >50</text>
<line x1="845.5" y1="675.0" x2="845.5" y2="678.5" stroke="#000" stroke-width="1" shape-rendering="crispEdges"/>
<text x="845.5" y="690.17" text-anchor="middle" font-size="10.2" font-weight="normal" fill="#000" textLength="9.9" lengthAdjust="spacingAndGlyphs" >60</text>
<line x1="874.5" y1="675.0" x2="874.5" y2="678.5" stroke="#000" stroke-width="1" shape-rendering="crispEdges"/>
<text x="874.5" y="690.17" text-anchor="middle" font-size="10.2" font-weight="normal" fill="#000" textLength="9.9" lengthAdjust="spacingAndGlyphs" >70</text>
<line x1="903.5" y1="675.0" x2="903.5" y2="678.5" stroke="#000" stroke-width="1" shape-rendering="crispEdges"/>
<text x="903.5" y="690.17" text-anchor="middle" font-size="10.2" font-weight="normal" fill="#000" textLength="9.9" lengthAdjust="spacingAndGlyphs" >80</text>
<line x1="932.5" y1="675.0" x2="932.5" y2="678.5" stroke="#000" stroke-width="1" shape-rendering="crispEdges"/>
<text x="932.5" y="690.17" text-anchor="middle" font-size="10.2" font-weight="normal" fill="#000" textLength="9.9" lengthAdjust="spacingAndGlyphs" >90</text>
<line x1="961.5" y1="675.0" x2="961.5" y2="678.5" stroke="#000" stroke-width="1" shape-rendering="crispEdges"/>
<text x="961.5" y="690.17" text-anchor="middle" font-size="10.2" font-weight="normal" fill="#000" textLength="14.850000000000001" lengthAdjust="spacingAndGlyphs" >100</text>
<text x="823" y="457.96" text-anchor="start" font-size="11" font-weight="bold" fill="#000" >Rg</text>
<text x="957" y="673.16" text-anchor="end" font-size="11" font-weight="bold" fill="#000" >Rf</text>
<circle cx="945.3" cy="560.4" r="2.5" fill="#ff1020"/>
<line x1="42.5" y1="902.5" x2="960.5" y2="902.5" stroke="#c0c0c0" stroke-width="1" shape-rendering="crispEdges"/>
<line x1="42.5" y1="882.5" x2="960.5" y2="882.5" stroke="#c0c0c0" stroke-width="1" shape-rendering="crispEdges"/>
<line x1="42.5" y1="862.5" x2="960.5" y2="862.5" stroke="#c0c0c0" stroke-width="1" shape-rendering="crispEdges"/>
<line x1="42.5" y1="842.5" x2="960.5" y2="842.5" stroke="#c0c0c0" stroke-width="1" shape-rendering="crispEdges"/>
<line x1="42.5" y1="822.5" x2="960.5" y2="822.5" stroke="#c0c0c0" stroke-width="1" shape-rendering="crispEdges"/>
<line x1="42.5" y1="802.5" x2="960.5" y2="802.5" stroke="#c0c0c0" stroke-width="1" shape-rendering="crispEdges"/>
<line x1="42.5" y1="782.5" x2="960.5" y2="782.5" stroke="#c0c0c0" stroke-width="1" shape-rendering="crispEdges"/>
<line x1="42.5" y1="762.5" x2="960.5" y2="762.5" stroke="#c0c0c0" stroke-width="1" shape-rendering="crispEdges"/>
<line x1="42.5" y1="742.5" x2="960.5" y2="742.5" stroke="#c0c0c0" stroke-width="1" shape-rendering="crispEdges"/>
<rect x="44" y="726" width="7" height="196.5" fill="#ffbfc8" shape-rendering="crispEdges"/>
<rect x="53" y="725" width="7" height="197.5" fill="#e9657e" shape-rendering="crispEdges"/>
<rect x="62" y="729" width="7" height="193.5" fill="#6b3444" shape-rendering="crispEdges"/>
<rect x="71" y="733" width="7" height="189.5" fill="#d8928a" shape-rendering="crispEdges"/>
<rect x="80" y="731" width="7" height="191.5" fill="#d83a5a" shape-rendering="crispEdges"/>
<rect x="89" y="735" width="7" height="187.5" fill="#a56060" shape-rendering="crispEdges"/>
<rect x="98" y="729" width="7" height="193.5" fill="#ba2748" shape-rendering="crispEdges"/>
<rect x="107" y="732" width="7" height="190.5" fill="#b8264a" shape-rendering="crispEdges"/>
<rect x="116" y="725" width="7" height="197.5" fill="#463840" shape-rendering="crispEdges"/>
<rect x="125" y="730" width="7" height="192.5" fill="#ff8f7a" shape-rendering="crispEdges"/>
<rect x="134" y="728" width="7" height="194.5" fill="#d8654f" shape-rendering="crispEdges"/>
<rect x="143" y="731" width="7" height="191.5" fill="#f67658" shape-rendering="crispEdges"/>
<rect x="152" y="726" width="7" height="196.5" fill="#964844" shape-rendering="crispEdges"/>
<rect x="161" y="725" width="7" height="197.5" fill="#c4a89c" shape-rendering="crispEdges"/>
<rect x="170" y="725" width="7" height="197.5" fill="#d8928a" shape-rendering="crispEdges"/>
<rect x="179" y="729" width="7" height="193.5" fill="#a5524a" shape-rendering="crispEdges"/>
<rect x="188" y="734" width="7" height="188.5" fill="#a0604a" shape-rendering="crispEdges"/>
<rect x="197" y="724" width="7" height="198.5" fill="#a87264" shape-rendering="crispEdges"/>
<rect x="206" y="735" width="7" height="187.5" fill="#d89c62" shape-rendering="crispEdges"/>
<rect x="215" y="727" width="7" height="195.5" fill="#f6765c" shape-rendering="crispEdges"/>
<rect x="224" y="735" width="7" height="187.5" fill="#fec478" shape-rendering="crispEdges"/>
<rect x="233" y="732" width="7" height="190.5" fill="#faac6a" shape-rendering="crispEdges"/>
<rect x="242" y="726" width="7" height="196.5" fill="#f2dcc4" shape-rendering="crispEdges"/>
<rect x="251" y="733" width="7" height="189.5" fill="#fedc98" shape-rendering="crispEdges"/>
<rect x="260" y="736" width="7" height="186.5" fill="#cea44a" shape-rendering="crispEdges"/>
<rect x="269" y="732" width="7" height="190.5" fill="#fed88a" shape-rendering="crispEdges"/>
<rect x="278" y="730" width="7" height="192.5" fill="#b4a88a" shape-rendering="crispEdges"/>
<rect x="287" y="727" width="7" height="195.5" fill="#5e5e3e" shape-rendering="crispEdges"/>
<rect x="296" y="728" width="7" height="194.5" fill="#ecd088" shape-rendering="crispEdges"/>
<rect x="305" y="726" width="7" height="196.5" fill="#a08c68" shape-rendering="crispEdges"/>
<rect x="314" y="728" width="7" height="194.5" fill="#f2d890" shape-rendering="crispEdges"/>
<rect x="323" y="728" width="7" height="194.5" fill="#c4b060" shape-rendering="crispEdges"/>
<rect x="332" y="724" width="7" height="198.5" fill="#eedcb4" shape-rendering="crispEdges"/>
<rect x="341" y="729" width="7" height="193.5" fill="#8e9048" shape-rendering="crispEdges"/>
<rect x="350" y="726" width="7" height="196.5" fill="#5e5e3c" shape-rendering="crispEdges"/>
<rect x="359" y="733" width="7" height="189.5" fill="#bebebe" shape-rendering="crispEdges"/>
<rect x="368" y="732" width="7" height="190.5" fill="#5e7040" shape-rendering="crispEdges"/>
<rect x="377" y="729" width="7" height="193.5" fill="#d4d4b4" shape-rendering="crispEdges"/>
<rect x="386" y="726" width="7" height="196.5" fill="#4c4840" shape-rendering="crispEdges"/>
<rect x="395" y="729" width="7" height="193.5" fill="#6e6a5c" shape-rendering="crispEdges"/>
<rect x="404" y="732" width="7" height="190.5" fill="#dcdcd0" shape-rendering="crispEdges"/>
<rect x="413" y="730" width="7" height="192.5" fill="#6eac60" shape-rendering="crispEdges"/>
<rect x="422" y="724" width="7" height="198.5" fill="#78b870" shape-rendering="crispEdges"/>
<rect x="431" y="724" width="7" height="198.5" fill="#403c3c" shape-rendering="crispEdges"/>
<rect x="440" y="729" width="7" height="193.5" fill="#4a9460" shape-rendering="crispEdges"/>
<rect x="449" y="726" width="7" height="196.5" fill="#70a480" shape-rendering="crispEdges"/>
<rect x="458" y="755" width="7" height="167.5" fill="#9ca498" shape-rendering="crispEdges"/>
<rect x="467" y="728" width="7" height="194.5" fill="#68c4a0" shape-rendering="crispEdges"/>
<rect x="476" y="731" width="7" height="191.5" fill="#3c7058" shape-rendering="crispEdges"/>
<rect x="485" y="734" width="7" height="188.5" fill="#548070" shape-rendering="crispEdges"/>
<rect x="494" y="736" width="7" height="186.5" fill="#6a8c80" shape-rendering="crispEdges"/>
<rect x="503" y="735" width="7" height="187.5" fill="#206454" shape-rendering="crispEdges"/>
<rect x="512" y="734" width="7" height="188.5" fill="#00806c" shape-rendering="crispEdges"/>
<rect x="521" y="731" width="7" height="191.5" fill="#a4dcd4" shape-rendering="crispEdges"/>
<rect x="530" y="732" width="7" height="190.5" fill="#94d0d0" shape-rendering="crispEdges"/>
<rect x="539" y="733" width="7" height="189.5" fill="#00b4b8" shape-rendering="crispEdges"/>
<rect x="548" y="732" width="7" height="190.5" fill="#009494" shape-rendering="crispEdges"/>
<rect x="557" y="734" width="7" height="188.5" fill="#00848c" shape-rendering="crispEdges"/>
<rect x="566" y="729" width="7" height="193.5" fill="#a8dcdc" shape-rendering="crispEdges"/>
<rect x="575" y="729" width="7" height="193.5" fill="#d0dce0" shape-rendering="crispEdges"/>
<rect x="584" y="731" width="7" height="191.5" fill="#94b4c0" shape-rendering="crispEdges"/>
<rect x="593" y="746" width="7" height="176.5" fill="#9c9ca0" shape-rendering="crispEdges"/>
<rect x="602" y="732" width="7" height="190.5" fill="#4c4c54" shape-rendering="crispEdges"/>
<rect x="611" y="737" width="7" height="185.5" fill="#0090ac" shape-rendering="crispEdges"/>
<rect x="620" y="726" width="7" height="196.5" fill="#005c68" shape-rendering="crispEdges"/>
<rect x="629" y="739" width="7" height="183.5" fill="#006c90" shape-rendering="crispEdges"/>
<rect x="638" y="739" width="7" height="183.5" fill="#00688c" shape-rendering="crispEdges"/>
<rect x="647" y="735" width="7" height="187.5" fill="#6c94b4" shape-rendering="crispEdges"/>
<rect x="656" y="735" width="7" height="187.5" fill="#747488" shape-rendering="crispEdges"/>
<rect x="665" y="735" width="7" height="187.5" fill="#70acdc" shape-rendering="crispEdges"/>
<rect x="674" y="744" width="7" height="178.5" fill="#2c4c78" shape-rendering="crispEdges"/>
<rect x="683" y="728" width="7" height="194.5" fill="#a8b4c4" shape-rendering="crispEdges"/>
<rect x="692" y="740" width="7" height="182.5" fill="#2c84c0" shape-rendering="crispEdges"/>
<rect x="701" y="755" width="7" height="167.5" fill="#403c40" shape-rendering="crispEdges"/>
<rect x="710" y="740" width="7" height="182.5" fill="#2c4878" shape-rendering="crispEdges"/>
<rect x="719" y="741" width="7" height="181.5" fill="#4c60b0" shape-rendering="crispEdges"/>
<rect x="728" y="761" width="7" height="161.5" fill="#5c5c90" shape-rendering="crispEdges"/>
<rect x="737" y="741" width="7" height="181.5" fill="#445ca0" shape-rendering="crispEdges"/>
<rect x="746" y="751" width="7" height="171.5" fill="#aca4d0" shape-rendering="crispEdges"/>
<rect x="755" y="744" width="7" height="178.5" fill="#a08cc4" shape-rendering="crispEdges"/>
<rect x="764" y="762" width="7" height="160.5" fill="#804c90" shape-rendering="crispEdges"/>
<rect x="773" y="732" width="7" height="190.5" fill="#d8d0e0" shape-rendering="crispEdges"/>
<rect x="782" y="737" width="7" height="185.5" fill="#b0a4c4" shape-rendering="crispEdges"/>
<rect x="791" y="726" width="7" height="196.5" fill="#483444" shape-rendering="crispEdges"/>
<rect x="800" y="747" width="7" height="175.5" fill="#705070" shape-rendering="crispEdges"/>
<rect x="809" y="741" width="7" height="181.5" fill="#bc80bc" shape-rendering="crispEdges"/>
<rect x="818" y="728" width="7" height="194.5" fill="#7c4078" shape-rendering="crispEdges"/>
<rect x="827" y="728" width="7" height="194.5" fill="#c078ac" shape-rendering="crispEdges"/>
<rect x="836" y="740" width="7" height="182.5" fill="#803c68" shape-rendering="crispEdges"/>
<rect x="845" y="728" width="7" height="194.5" fill="#8c4c78" shape-rendering="crispEdges"/>
<rect x="854" y="733" width="7" height="189.5" fill="#ccb8c4" shape-rendering="crispEdges"/>
<rect x="863" y="736" width="7" height="186.5" fill="#b4688c" shape-rendering="crispEdges"/>
<rect x="872" y="731" width="7" height="191.5" fill="#c88ca8" shape-rendering="crispEdges"/>
<rect x="881" y="743" width="7" height="179.5" fill="#98345c" shape-rendering="crispEdges"/>
<rect x="890" y="729" width="7" height="193.5" fill="#dc84a8" shape-rendering="crispEdges"/>
<rect x="899" y="724" width="7" height="198.5" fill="#f4a8c0" shape-rendering="crispEdges"/>
<rect x="908" y="731" width="7" height="191.5" fill="#a86478" shape-rendering="crispEdges"/>
<rect x="917" y="723" width="7" height="199.5" fill="#ec7490" shape-rendering="crispEdges"/>
<rect x="926" y="729" width="7" height="193.5" fill="#d84070" shape-rendering="crispEdges"/>
<rect x="944.5" y="733.5" width="7" height="188.5" fill="#fff" stroke="#000" stroke-width="1" shape-rendering="crispEdges"/>
<rect x="42.5" y="722.5" width="918.0" height="200.0" fill="none" stroke="#000" stroke-width="1" shape-rendering="crispEdges"/>
<text x="39.2" y="925.47" text-anchor="end" font-size="10.2" font-weight="normal" fill="#000" >0</text>
<text x="39.2" y="905.47" text-anchor="end" font-size="10.2" font-weight="normal" fill="#000" textLength="10.1" lengthAdjust="spacingAndGlyphs" >10</text>
<text x="39.2" y="885.47" text-anchor="end" font-size="10.2" font-weight="normal" fill="#000" textLength="10.1" lengthAdjust="spacingAndGlyphs" >20</text>
<text x="39.2" y="865.47" text-anchor="end" font-size="10.2" font-weight="normal" fill="#000" textLength="10.1" lengthAdjust="spacingAndGlyphs" >30</text>
<text x="39.2" y="845.47" text-anchor="end" font-size="10.2" font-weight="normal" fill="#000" textLength="10.1" lengthAdjust="spacingAndGlyphs" >40</text>
<text x="39.2" y="825.47" text-anchor="end" font-size="10.2" font-weight="normal" fill="#000" textLength="10.1" lengthAdjust="spacingAndGlyphs" >50</text>
<text x="39.2" y="805.47" text-anchor="end" font-size="10.2" font-weight="normal" fill="#000" textLength="10.1" lengthAdjust="spacingAndGlyphs" >60</text>
<text x="39.2" y="785.47" text-anchor="end" font-size="10.2" font-weight="normal" fill="#000" textLength="10.1" lengthAdjust="spacingAndGlyphs" >70</text>
<text x="39.2" y="765.58" text-anchor="end" font-size="10.5" font-weight="bold" fill="#000" textLength="13.5" lengthAdjust="spacingAndGlyphs" >80</text>
<text x="39.2" y="745.47" text-anchor="end" font-size="10.2" font-weight="normal" fill="#000" textLength="10.1" lengthAdjust="spacingAndGlyphs" >90</text>
<text x="39.2" y="725.47" text-anchor="end" font-size="10.2" font-weight="normal" fill="#000" textLength="15.149999999999999" lengthAdjust="spacingAndGlyphs" >100</text>
<text x="500.5" y="714.96" text-anchor="middle" font-size="11" font-weight="normal" fill="#000" textLength="114" lengthAdjust="spacingAndGlyphs" >Color Fidelity by Sample</text>
<line x1="42.5" y1="923" x2="42.5" y2="926" stroke="#000" stroke-width="1" shape-rendering="crispEdges"/>
<line x1="51.5" y1="923" x2="51.5" y2="926" stroke="#000" stroke-width="1" shape-rendering="crispEdges"/>
<line x1="60.5" y1="923" x2="60.5" y2="926" stroke="#000" stroke-width="1" shape-rendering="crispEdges"/>
<line x1="69.5" y1="923" x2="69.5" y2="926" stroke="#000" stroke-width="1" shape-rendering="crispEdges"/>
<line x1="78.5" y1="923" x2="78.5" y2="926" stroke="#000" stroke-width="1" shape-rendering="crispEdges"/>
<line x1="87.5" y1="923" x2="87.5" y2="926" stroke="#000" stroke-width="1" shape-rendering="crispEdges"/>
<line x1="96.5" y1="923" x2="96.5" y2="926" stroke="#000" stroke-width="1" shape-rendering="crispEdges"/>
<line x1="105.5" y1="923" x2="105.5" y2="926" stroke="#000" stroke-width="1" shape-rendering="crispEdges"/>
<line x1="114.5" y1="923" x2="114.5" y2="926" stroke="#000" stroke-width="1" shape-rendering="crispEdges"/>
<line x1="123.5" y1="923" x2="123.5" y2="926" stroke="#000" stroke-width="1" shape-rendering="crispEdges"/>
<line x1="132.5" y1="923" x2="132.5" y2="926" stroke="#000" stroke-width="1" shape-rendering="crispEdges"/>
<line x1="141.5" y1="923" x2="141.5" y2="926" stroke="#000" stroke-width="1" shape-rendering="crispEdges"/>
<line x1="150.5" y1="923" x2="150.5" y2="926" stroke="#000" stroke-width="1" shape-rendering="crispEdges"/>
<line x1="159.5" y1="923" x2="159.5" y2="926" stroke="#000" stroke-width="1" shape-rendering="crispEdges"/>
<line x1="168.5" y1="923" x2="168.5" y2="926" stroke="#000" stroke-width="1" shape-rendering="crispEdges"/>
<line x1="177.5" y1="923" x2="177.5" y2="926" stroke="#000" stroke-width="1" shape-rendering="crispEdges"/>
<line x1="186.5" y1="923" x2="186.5" y2="926" stroke="#000" stroke-width="1" shape-rendering="crispEdges"/>
<line x1="195.5" y1="923" x2="195.5" y2="926" stroke="#000" stroke-width="1" shape-rendering="crispEdges"/>
<line x1="204.5" y1="923" x2="204.5" y2="926" stroke="#000" stroke-width="1" shape-rendering="crispEdges"/>
<line x1="213.5" y1="923" x2="213.5" y2="926" stroke="#000" stroke-width="1" shape-rendering="crispEdges"/>
<line x1="222.5" y1="923" x2="222.5" y2="926" stroke="#000" stroke-width="1" shape-rendering="crispEdges"/>
<line x1="231.5" y1="923" x2="231.5" y2="926" stroke="#000" stroke-width="1" shape-rendering="crispEdges"/>
<line x1="240.5" y1="923" x2="240.5" y2="926" stroke="#000" stroke-width="1" shape-rendering="crispEdges"/>
<line x1="249.5" y1="923" x2="249.5" y2="926" stroke="#000" stroke-width="1" shape-rendering="crispEdges"/>
<line x1="258.5" y1="923" x2="258.5" y2="926" stroke="#000" stroke-width="1" shape-rendering="crispEdges"/>
<line x1="267.5" y1="923" x2="267.5" y2="926" stroke="#000" stroke-width="1" shape-rendering="crispEdges"/>
<line x1="276.5" y1="923" x2="276.5" y2="926" stroke="#000" stroke-width="1" shape-rendering="crispEdges"/>
<line x1="285.5" y1="923" x2="285.5" y2="926" stroke="#000" stroke-width="1" shape-rendering="crispEdges"/>
<line x1="294.5" y1="923" x2="294.5" y2="926" stroke="#000" stroke-width="1" shape-rendering="crispEdges"/>
<line x1="303.5" y1="923" x2="303.5" y2="926" stroke="#000" stroke-width="1" shape-rendering="crispEdges"/>
<line x1="312.5" y1="923" x2="312.5" y2="926" stroke="#000" stroke-width="1" shape-rendering="crispEdges"/>
<line x1="321.5" y1="923" x2="321.5" y2="926" stroke="#000" stroke-width="1" shape-rendering="crispEdges"/>
<line x1="330.5" y1="923" x2="330.5" y2="926" stroke="#000" stroke-width="1" shape-rendering="crispEdges"/>
<line x1="339.5" y1="923" x2="339.5" y2="926" stroke="#000" stroke-width="1" shape-rendering="crispEdges"/>
<line x1="348.5" y1="923" x2="348.5" y2="926" stroke="#000" stroke-width="1" shape-rendering="crispEdges"/>
<line x1="357.5" y1="923" x2="357.5" y2="926" stroke="#000" stroke-width="1" shape-rendering="crispEdges"/>
<line x1="366.5" y1="923" x2="366.5" y2="926" stroke="#000" stroke-width="1" shape-rendering="crispEdges"/>
<line x1="375.5" y1="923" x2="375.5" y2="926" stroke="#000" stroke-width="1" shape-rendering="crispEdges"/>
<line x1="384.5" y1="923" x2="384.5" y2="926" stroke="#000" stroke-width="1" shape-rendering="crispEdges"/>
<line x1="393.5" y1="923" x2="393.5" y2="926" stroke="#000" stroke-width="1" shape-rendering="crispEdges"/>
<line x1="402.5" y1="923" x2="402.5" y2="926" stroke="#000" stroke-width="1" shape-rendering="crispEdges"/>
<line x1="411.5" y1="923" x2="411.5" y2="926" stroke="#000" stroke-width="1" shape-rendering="crispEdges"/>
<line x1="420.5" y1="923" x2="420.5" y2="926" stroke="#000" stroke-width="1" shape-rendering="crispEdges"/>
<line x1="429.5" y1="923" x2="429.5" y2="926" stroke="#000" stroke-width="1" shape-rendering="crispEdges"/>
<line x1="438.5" y1="923" x2="438.5" y2="926" stroke="#000" stroke-width="1" shape-rendering="crispEdges"/>
<line x1="447.5" y1="923" x2="447.5" y2="926" stroke="#000" stroke-width="1" shape-rendering="crispEdges"/>
<line x1="456.5" y1="923" x2="456.5" y2="926" stroke="#000" stroke-width="1" shape-rendering="crispEdges"/>
<line x1="465.5" y1="923" x2="465.5" y2="926" stroke="#000" stroke-width="1" shape-rendering="crispEdges"/>
<line x1="474.5" y1="923" x2="474.5" y2="926" stroke="#000" stroke-width="1" shape-rendering="crispEdges"/>
<line x1="483.5" y1="923" x2="483.5" y2="926" stroke="#000" stroke-width="1" shape-rendering="crispEdges"/>
<line x1="492.5" y1="923" x2="492.5" y2="926" stroke="#000" stroke-width="1" shape-rendering="crispEdges"/>
<line x1="501.5" y1="923" x2="501.5" y2="926" stroke="#000" stroke-width="1" shape-rendering="crispEdges"/>
<line x1="510.5" y1="923" x2="510.5" y2="926" stroke="#000" stroke-width="1" shape-rendering="crispEdges"/>
<line x1="519.5" y1="923" x2="519.5" y2="926" stroke="#000" stroke-width="1" shape-rendering="crispEdges"/>
<line x1="528.5" y1="923" x2="528.5" y2="926" stroke="#000" stroke-width="1" shape-rendering="crispEdges"/>
<line x1="537.5" y1="923" x2="537.5" y2="926" stroke="#000" stroke-width="1" shape-rendering="crispEdges"/>
<line x1="546.5" y1="923" x2="546.5" y2="926" stroke="#000" stroke-width="1" shape-rendering="crispEdges"/>
<line x1="555.5" y1="923" x2="555.5" y2="926" stroke="#000" stroke-width="1" shape-rendering="crispEdges"/>
<line x1="564.5" y1="923" x2="564.5" y2="926" stroke="#000" stroke-width="1" shape-rendering="crispEdges"/>
<line x1="573.5" y1="923" x2="573.5" y2="926" stroke="#000" stroke-width="1" shape-rendering="crispEdges"/>
<line x1="582.5" y1="923" x2="582.5" y2="926" stroke="#000" stroke-width="1" shape-rendering="crispEdges"/>
<line x1="591.5" y1="923" x2="591.5" y2="926" stroke="#000" stroke-width="1" shape-rendering="crispEdges"/>
<line x1="600.5" y1="923" x2="600.5" y2="926" stroke="#000" stroke-width="1" shape-rendering="crispEdges"/>
<line x1="609.5" y1="923" x2="609.5" y2="926" stroke="#000" stroke-width="1" shape-rendering="crispEdges"/>
<line x1="618.5" y1="923" x2="618.5" y2="926" stroke="#000" stroke-width="1" shape-rendering="crispEdges"/>
<line x1="627.5" y1="923" x2="627.5" y2="926" stroke="#000" stroke-width="1" shape-rendering="crispEdges"/>
<line x1="636.5" y1="923" x2="636.5" y2="926" stroke="#000" stroke-width="1" shape-rendering="crispEdges"/>
<line x1="645.5" y1="923" x2="645.5" y2="926" stroke="#000" stroke-width="1" shape-rendering="crispEdges"/>
<line x1="654.5" y1="923" x2="654.5" y2="926" stroke="#000" stroke-width="1" shape-rendering="crispEdges"/>
<line x1="663.5" y1="923" x2="663.5" y2="926" stroke="#000" stroke-width="1" shape-rendering="crispEdges"/>
<line x1="672.5" y1="923" x2="672.5" y2="926" stroke="#000" stroke-width="1" shape-rendering="crispEdges"/>
<line x1="681.5" y1="923" x2="681.5" y2="926" stroke="#000" stroke-width="1" shape-rendering="crispEdges"/>
<line x1="690.5" y1="923" x2="690.5" y2="926" stroke="#000" stroke-width="1" shape-rendering="crispEdges"/>
<line x1="699.5" y1="923" x2="699.5" y2="926" stroke="#000" stroke-width="1" shape-rendering="crispEdges"/>
<line x1="708.5" y1="923" x2="708.5" y2="926" stroke="#000" stroke-width="1" shape-rendering="crispEdges"/>
<line x1="717.5" y1="923" x2="717.5" y2="926" stroke="#000" stroke-width="1" shape-rendering="crispEdges"/>
<line x1="726.5" y1="923" x2="726.5" y2="926" stroke="#000" stroke-width="1" shape-rendering="crispEdges"/>
<line x1="735.5" y1="923" x2="735.5" y2="926" stroke="#000" stroke-width="1" shape-rendering="crispEdges"/>
<line x1="744.5" y1="923" x2="744.5" y2="926" stroke="#000" stroke-width="1" shape-rendering="crispEdges"/>
<line x1="753.5" y1="923" x2="753.5" y2="926" stroke="#000" stroke-width="1" shape-rendering="crispEdges"/>
<line x1="762.5" y1="923" x2="762.5" y2="926" stroke="#000" stroke-width="1" shape-rendering="crispEdges"/>
<line x1="771.5" y1="923" x2="771.5" y2="926" stroke="#000" stroke-width="1" shape-rendering="crispEdges"/>
<line x1="780.5" y1="923" x2="780.5" y2="926" stroke="#000" stroke-width="1" shape-rendering="crispEdges"/>
<line x1="789.5" y1="923" x2="789.5" y2="926" stroke="#000" stroke-width="1" shape-rendering="crispEdges"/>
<line x1="798.5" y1="923" x2="798.5" y2="926" stroke="#000" stroke-width="1" shape-rendering="crispEdges"/>
<line x1="807.5" y1="923" x2="807.5" y2="926" stroke="#000" stroke-width="1" shape-rendering="crispEdges"/>
<line x1="816.5" y1="923" x2="816.5" y2="926" stroke="#000" stroke-width="1" shape-rendering="crispEdges"/>
<line x1="825.5" y1="923" x2="825.5" y2="926" stroke="#000" stroke-width="1" shape-rendering="crispEdges"/>
<line x1="834.5" y1="923" x2="834.5" y2="926" stroke="#000" stroke-width="1" shape-rendering="crispEdges"/>
<line x1="843.5" y1="923" x2="843.5" y2="926" stroke="#000" stroke-width="1" shape-rendering="crispEdges"/>
<line x1="852.5" y1="923" x2="852.5" y2="926" stroke="#000" stroke-width="1" shape-rendering="crispEdges"/>
<line x1="861.5" y1="923" x2="861.5" y2="926" stroke="#000" stroke-width="1" shape-rendering="crispEdges"/>
<line x1="870.5" y1="923" x2="870.5" y2="926" stroke="#000" stroke-width="1" shape-rendering="crispEdges"/>
<line x1="879.5" y1="923" x2="879.5" y2="926" stroke="#000" stroke-width="1" shape-rendering="crispEdges"/>
<line x1="888.5" y1="923" x2="888.5" y2="926" stroke="#000" stroke-width="1" shape-rendering="crispEdges"/>
<line x1="897.5" y1="923" x2="897.5" y2="926" stroke="#000" stroke-width="1" shape-rendering="crispEdges"/>
<line x1="906.5" y1="923" x2="906.5" y2="926" stroke="#000" stroke-width="1" shape-rendering="crispEdges"/>
<line x1="915.5" y1="923" x2="915.5" y2="926" stroke="#000" stroke-width="1" shape-rendering="crispEdges"/>
<line x1="924.5" y1="923" x2="924.5" y2="926" stroke="#000" stroke-width="1" shape-rendering="crispEdges"/>
<line x1="933.5" y1="923" x2="933.5" y2="926" stroke="#000" stroke-width="1" shape-rendering="crispEdges"/>
<text x="48.3" y="931.95" text-anchor="end" font-size="9.3" font-weight="normal" fill="#000" transform="rotate(-90 48.3 928.6)" stroke="#000" stroke-width="0.25" textLength="29" lengthAdjust="spacingAndGlyphs" >CES01</text>
<text x="66.3" y="931.95" text-anchor="end" font-size="9.3" font-weight="normal" fill="#000" transform="rotate(-90 66.3 928.6)" stroke="#000" stroke-width="0.25" textLength="29" lengthAdjust="spacingAndGlyphs" >CES03</text>
<text x="84.3" y="931.95" text-anchor="end" font-size="9.3" font-weight="normal" fill="#000" transform="rotate(-90 84.3 928.6)" stroke="#000" stroke-width="0.25" textLength="29" lengthAdjust="spacingAndGlyphs" >CES05</text>
<text x="102.3" y="931.95" text-anchor="end" font-size="9.3" font-weight="normal" fill="#000" transform="rotate(-90 102.3 928.6)" stroke="#000" stroke-width="0.25" textLength="29" lengthAdjust="spacingAndGlyphs" >CES07</text>
<text x="120.3" y="931.95" text-anchor="end" font-size="9.3" font-weight="normal" fill="#000" transform="rotate(-90 120.3 928.6)" stroke="#000" stroke-width="0.25" textLength="29" lengthAdjust="spacingAndGlyphs" >CES09</text>
<text x="138.3" y="931.95" text-anchor="end" font-size="9.3" font-weight="normal" fill="#000" transform="rotate(-90 138.3 928.6)" stroke="#000" stroke-width="0.25" textLength="29" lengthAdjust="spacingAndGlyphs" >CES11</text>
<text x="156.3" y="931.95" text-anchor="end" font-size="9.3" font-weight="normal" fill="#000" transform="rotate(-90 156.3 928.6)" stroke="#000" stroke-width="0.25" textLength="29" lengthAdjust="spacingAndGlyphs" >CES13</text>
<text x="174.3" y="931.95" text-anchor="end" font-size="9.3" font-weight="normal" fill="#000" transform="rotate(-90 174.3 928.6)" stroke="#000" stroke-width="0.25" textLength="29" lengthAdjust="spacingAndGlyphs" >CES15</text>
<text x="192.3" y="931.95" text-anchor="end" font-size="9.3" font-weight="normal" fill="#000" transform="rotate(-90 192.3 928.6)" stroke="#000" stroke-width="0.25" textLength="29" lengthAdjust="spacingAndGlyphs" >CES17</text>
<text x="210.3" y="931.95" text-anchor="end" font-size="9.3" font-weight="normal" fill="#000" transform="rotate(-90 210.3 928.6)" stroke="#000" stroke-width="0.25" textLength="29" lengthAdjust="spacingAndGlyphs" >CES19</text>
<text x="228.3" y="931.95" text-anchor="end" font-size="9.3" font-weight="normal" fill="#000" transform="rotate(-90 228.3 928.6)" stroke="#000" stroke-width="0.25" textLength="29" lengthAdjust="spacingAndGlyphs" >CES21</text>
<text x="246.3" y="931.95" text-anchor="end" font-size="9.3" font-weight="normal" fill="#000" transform="rotate(-90 246.3 928.6)" stroke="#000" stroke-width="0.25" textLength="29" lengthAdjust="spacingAndGlyphs" >CES23</text>
<text x="264.3" y="931.95" text-anchor="end" font-size="9.3" font-weight="normal" fill="#000" transform="rotate(-90 264.3 928.6)" stroke="#000" stroke-width="0.25" textLength="29" lengthAdjust="spacingAndGlyphs" >CES25</text>
<text x="282.3" y="931.95" text-anchor="end" font-size="9.3" font-weight="normal" fill="#000" transform="rotate(-90 282.3 928.6)" stroke="#000" stroke-width="0.25" textLength="29" lengthAdjust="spacingAndGlyphs" >CES27</text>
<text x="300.3" y="931.95" text-anchor="end" font-size="9.3" font-weight="normal" fill="#000" transform="rotate(-90 300.3 928.6)" stroke="#000" stroke-width="0.25" textLength="29" lengthAdjust="spacingAndGlyphs" >CES29</text>
<text x="318.3" y="931.95" text-anchor="end" font-size="9.3" font-weight="normal" fill="#000" transform="rotate(-90 318.3 928.6)" stroke="#000" stroke-width="0.25" textLength="29" lengthAdjust="spacingAndGlyphs" >CES31</text>
<text x="336.3" y="931.95" text-anchor="end" font-size="9.3" font-weight="normal" fill="#000" transform="rotate(-90 336.3 928.6)" stroke="#000" stroke-width="0.25" textLength="29" lengthAdjust="spacingAndGlyphs" >CES33</text>
<text x="354.3" y="931.95" text-anchor="end" font-size="9.3" font-weight="normal" fill="#000" transform="rotate(-90 354.3 928.6)" stroke="#000" stroke-width="0.25" textLength="29" lengthAdjust="spacingAndGlyphs" >CES35</text>
<text x="372.3" y="931.95" text-anchor="end" font-size="9.3" font-weight="normal" fill="#000" transform="rotate(-90 372.3 928.6)" stroke="#000" stroke-width="0.25" textLength="29" lengthAdjust="spacingAndGlyphs" >CES37</text>
<text x="390.3" y="931.95" text-anchor="end" font-size="9.3" font-weight="normal" fill="#000" transform="rotate(-90 390.3 928.6)" stroke="#000" stroke-width="0.25" textLength="29" lengthAdjust="spacingAndGlyphs" >CES39</text>
<text x="408.3" y="931.95" text-anchor="end" font-size="9.3" font-weight="normal" fill="#000" transform="rotate(-90 408.3 928.6)" stroke="#000" stroke-width="0.25" textLength="29" lengthAdjust="spacingAndGlyphs" >CES41</text>
<text x="426.3" y="931.95" text-anchor="end" font-size="9.3" font-weight="normal" fill="#000" transform="rotate(-90 426.3 928.6)" stroke="#000" stroke-width="0.25" textLength="29" lengthAdjust="spacingAndGlyphs" >CES43</text>
<text x="444.3" y="931.95" text-anchor="end" font-size="9.3" font-weight="normal" fill="#000" transform="rotate(-90 444.3 928.6)" stroke="#000" stroke-width="0.25" textLength="29" lengthAdjust="spacingAndGlyphs" >CES45</text>
<text x="462.3" y="931.95" text-anchor="end" font-size="9.3" font-weight="normal" fill="#000" transform="rotate(-90 462.3 928.6)" stroke="#000" stroke-width="0.25" textLength="29" lengthAdjust="spacingAndGlyphs" >CES47</text>
<text x="480.3" y="931.95" text-anchor="end" font-size="9.3" font-weight="normal" fill="#000" transform="rotate(-90 480.3 928.6)" stroke="#000" stroke-width="0.25" textLength="29" lengthAdjust="spacingAndGlyphs" >CES49</text>
<text x="498.3" y="931.95" text-anchor="end" font-size="9.3" font-weight="normal" fill="#000" transform="rotate(-90 498.3 928.6)" stroke="#000" stroke-width="0.25" textLength="29" lengthAdjust="spacingAndGlyphs" >CES51</text>
<text x="516.3" y="931.95" text-anchor="end" font-size="9.3" font-weight="normal" fill="#000" transform="rotate(-90 516.3 928.6)" stroke="#000" stroke-width="0.25" textLength="29" lengthAdjust="spacingAndGlyphs" >CES53</text>
<text x="534.3" y="931.95" text-anchor="end" font-size="9.3" font-weight="normal" fill="#000" transform="rotate(-90 534.3 928.6)" stroke="#000" stroke-width="0.25" textLength="29" lengthAdjust="spacingAndGlyphs" >CES55</text>
<text x="552.3" y="931.95" text-anchor="end" font-size="9.3" font-weight="normal" fill="#000" transform="rotate(-90 552.3 928.6)" stroke="#000" stroke-width="0.25" textLength="29" lengthAdjust="spacingAndGlyphs" >CES57</text>
<text x="570.3" y="931.95" text-anchor="end" font-size="9.3" font-weight="normal" fill="#000" transform="rotate(-90 570.3 928.6)" stroke="#000" stroke-width="0.25" textLength="29" lengthAdjust="spacingAndGlyphs" >CES59</text>
<text x="588.3" y="931.95" text-anchor="end" font-size="9.3" font-weight="normal" fill="#000" transform="rotate(-90 588.3 928.6)" stroke="#000" stroke-width="0.25" textLength="29" lengthAdjust="spacingAndGlyphs" >CES61</text>
<text x="606.3" y="931.95" text-anchor="end" font-size="9.3" font-weight="normal" fill="#000" transform="rotate(-90 606.3 928.6)" stroke="#000" stroke-width="0.25" textLength="29" lengthAdjust="spacingAndGlyphs" >CES63</text>
<text x="624.3" y="931.95" text-anchor="end" font-size="9.3" font-weight="normal" fill="#000" transform="rotate(-90 624.3 928.6)" stroke="#000" stroke-width="0.25" textLength="29" lengthAdjust="spacingAndGlyphs" >CES65</text>
<text x="642.3" y="931.95" text-anchor="end" font-size="9.3" font-weight="normal" fill="#000" transform="rotate(-90 642.3 928.6)" stroke="#000" stroke-width="0.25" textLength="29" lengthAdjust="spacingAndGlyphs" >CES67</text>
<text x="660.3" y="931.95" text-anchor="end" font-size="9.3" font-weight="normal" fill="#000" transform="rotate(-90 660.3 928.6)" stroke="#000" stroke-width="0.25" textLength="29" lengthAdjust="spacingAndGlyphs" >CES69</text>
<text x="678.3" y="931.95" text-anchor="end" font-size="9.3" font-weight="normal" fill="#000" transform="rotate(-90 678.3 928.6)" stroke="#000" stroke-width="0.25" textLength="29" lengthAdjust="spacingAndGlyphs" >CES71</text>
<text x="696.3" y="931.95" text-anchor="end" font-size="9.3" font-weight="normal" fill="#000" transform="rotate(-90 696.3 928.6)" stroke="#000" stroke-width="0.25" textLength="29" lengthAdjust="spacingAndGlyphs" >CES73</text>
<text x="714.3" y="931.95" text-anchor="end" font-size="9.3" font-weight="normal" fill="#000" transform="rotate(-90 714.3 928.6)" stroke="#000" stroke-width="0.25" textLength="29" lengthAdjust="spacingAndGlyphs" >CES75</text>
<text x="732.3" y="931.95" text-anchor="end" font-size="9.3" font-weight="normal" fill="#000" transform="rotate(-90 732.3 928.6)" stroke="#000" stroke-width="0.25" textLength="29" lengthAdjust="spacingAndGlyphs" >CES77</text>
<text x="750.3" y="931.95" text-anchor="end" font-size="9.3" font-weight="normal" fill="#000" transform="rotate(-90 750.3 928.6)" stroke="#000" stroke-width="0.25" textLength="29" lengthAdjust="spacingAndGlyphs" >CES79</text>
<text x="768.3" y="931.95" text-anchor="end" font-size="9.3" font-weight="normal" fill="#000" transform="rotate(-90 768.3 928.6)" stroke="#000" stroke-width="0.25" textLength="29" lengthAdjust="spacingAndGlyphs" >CES81</text>
<text x="786.3" y="931.95" text-anchor="end" font-size="9.3" font-weight="normal" fill="#000" transform="rotate(-90 786.3 928.6)" stroke="#000" stroke-width="0.25" textLength="29" lengthAdjust="spacingAndGlyphs" >CES83</text>
<text x="804.3" y="931.95" text-anchor="end" font-size="9.3" font-weight="normal" fill="#000" transform="rotate(-90 804.3 928.6)" stroke="#000" stroke-width="0.25" textLength="29" lengthAdjust="spacingAndGlyphs" >CES85</text>
<text x="822.3" y="931.95" text-anchor="end" font-size="9.3" font-weight="normal" fill="#000" transform="rotate(-90 822.3 928.6)" stroke="#000" stroke-width="0.25" textLength="29" lengthAdjust="spacingAndGlyphs" >CES87</text>
<text x="840.3" y="931.95" text-anchor="end" font-size="9.3" font-weight="normal" fill="#000" transform="rotate(-90 840.3 928.6)" stroke="#000" stroke-width="0.25" textLength="29" lengthAdjust="spacingAndGlyphs" >CES89</text>
<text x="858.3" y="931.95" text-anchor="end" font-size="9.3" font-weight="normal" fill="#000" transform="rotate(-90 858.3 928.6)" stroke="#000" stroke-width="0.25" textLength="29" lengthAdjust="spacingAndGlyphs" >CES91</text>
<text x="876.3" y="931.95" text-anchor="end" font-size="9.3" font-weight="normal" fill="#000" transform="rotate(-90 876.3 928.6)" stroke="#000" stroke-width="0.25" textLength="29" lengthAdjust="spacingAndGlyphs" >CES93</text>
<text x="894.3" y="931.95" text-anchor="end" font-size="9.3" font-weight="normal" fill="#000" transform="rotate(-90 894.3 928.6)" stroke="#000" stroke-width="0.25" textLength="29" lengthAdjust="spacingAndGlyphs" >CES95</text>
<text x="912.3" y="931.95" text-anchor="end" font-size="9.3" font-weight="normal" fill="#000" transform="rotate(-90 912.3 928.6)" stroke="#000" stroke-width="0.25" textLength="29" lengthAdjust="spacingAndGlyphs" >CES97</text>
<text x="930.3" y="931.95" text-anchor="end" font-size="9.3" font-weight="normal" fill="#000" transform="rotate(-90 930.3 928.6)" stroke="#000" stroke-width="0.25" textLength="29" lengthAdjust="spacingAndGlyphs" >CES99</text>
<text x="947.7" y="932.02" text-anchor="end" font-size="9.5" font-weight="bold" fill="#000" transform="rotate(-90 947.7 928.6)" stroke="#000" stroke-width="0.25" >Rf</text>
</svg>

</body></html>
